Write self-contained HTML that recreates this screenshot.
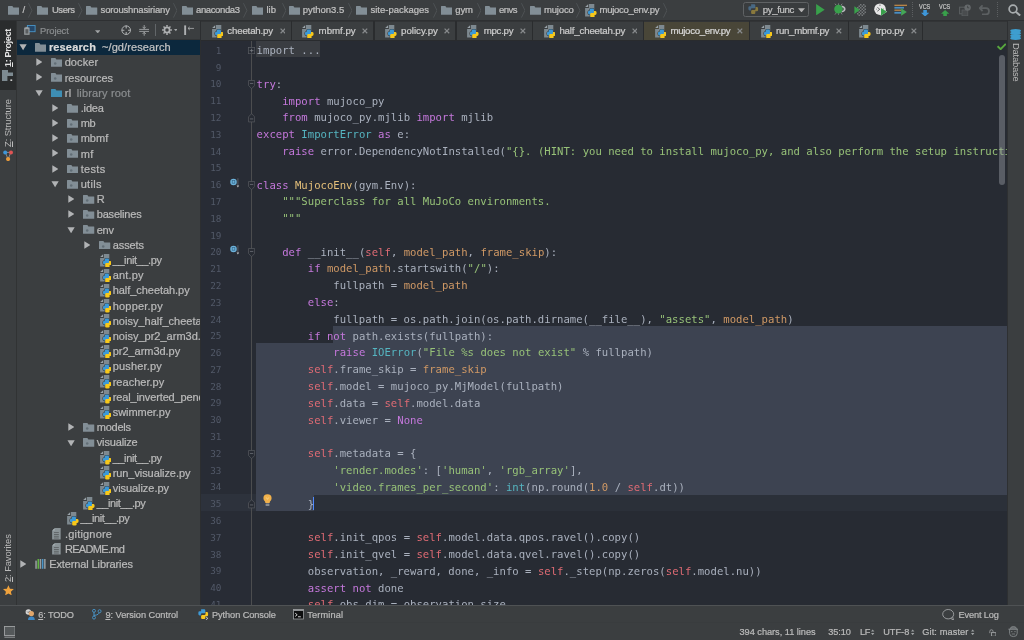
<!DOCTYPE html>
<html lang="en"><head><meta charset="utf-8"><title>mujoco_env.py - research</title><style>
html,body{margin:0;padding:0}
body{width:1024px;height:640px;overflow:hidden;background:#3c3f41;position:relative;font-family:"Liberation Sans",sans-serif;}
.t{position:absolute;white-space:pre;font-family:"Liberation Sans",sans-serif;-webkit-text-stroke:0.22px}
.cl{position:absolute;left:56.00px;white-space:pre;font-family:"DejaVu Sans Mono","Liberation Mono",monospace;font-size:10.60px;line-height:16.80px;height:16.80px;color:#abb2bf;letter-spacing:0.0145px}
.ln{position:absolute;left:0;width:20.80px;text-align:right;font-family:"DejaVu Sans Mono","Liberation Mono",monospace;font-size:9.30px;line-height:16.80px;height:16.80px;color:#535a69;letter-spacing:0.0000px}
#app{position:absolute;left:0;top:0;width:1024px;height:640px;overflow:hidden;opacity:0.999;will-change:transform}
u{text-decoration:underline;text-underline-offset:1px}
</style></head><body>
<div id="app">
<div style="position:absolute;left:0.00px;top:0.00px;width:1024.00px;height:20.00px;background:#3c3f41;"></div>
<div style="position:absolute;left:0.00px;top:20.00px;width:1024.00px;height:1.40px;background:#2f3133;"></div>
<svg style="position:absolute;left:7.75px;top:6.00px;" width="11.25" height="8.75" viewBox="0 0 18 14"><path d="M0 0.6 Q0 0 0.6 0 H7 L8.6 2.2 H17.4 Q18 2.2 18 2.8 V13.4 Q18 14 17.4 14 H0.6 Q0 14 0 13.4 Z" fill="#838f97"/></svg>
<span class="t " style="left:22.50px;top:3.30px;font-size:9.50px;line-height:14px;color:#c2c2c2;letter-spacing:0.461px;">/</span>
<svg style="position:absolute;left:28.30px;top:0.00px;" width="4.60" height="20.00" viewBox="0 0 5 20"><path d="M0.5 2.6 L4.3 10.4 L0.5 18.2" stroke="#53575a" stroke-width="0.9" fill="none"/></svg>
<svg style="position:absolute;left:36.90px;top:6.00px;" width="11.25" height="8.75" viewBox="0 0 18 14"><path d="M0 0.6 Q0 0 0.6 0 H7 L8.6 2.2 H17.4 Q18 2.2 18 2.8 V13.4 Q18 14 17.4 14 H0.6 Q0 14 0 13.4 Z" fill="#838f97"/></svg>
<span class="t " style="left:51.90px;top:3.30px;font-size:9.50px;line-height:14px;color:#c2c2c2;letter-spacing:-0.427px;">Users</span>
<svg style="position:absolute;left:78.00px;top:0.00px;" width="4.60" height="20.00" viewBox="0 0 5 20"><path d="M0.5 2.6 L4.3 10.4 L0.5 18.2" stroke="#53575a" stroke-width="0.9" fill="none"/></svg>
<svg style="position:absolute;left:86.25px;top:6.00px;" width="11.25" height="8.75" viewBox="0 0 18 14"><path d="M0 0.6 Q0 0 0.6 0 H7 L8.6 2.2 H17.4 Q18 2.2 18 2.8 V13.4 Q18 14 17.4 14 H0.6 Q0 14 0 13.4 Z" fill="#838f97"/></svg>
<span class="t " style="left:100.60px;top:3.30px;font-size:9.50px;line-height:14px;color:#c2c2c2;letter-spacing:-0.168px;">soroushnasiriany</span>
<svg style="position:absolute;left:172.80px;top:0.00px;" width="4.60" height="20.00" viewBox="0 0 5 20"><path d="M0.5 2.6 L4.3 10.4 L0.5 18.2" stroke="#53575a" stroke-width="0.9" fill="none"/></svg>
<svg style="position:absolute;left:181.50px;top:6.00px;" width="11.25" height="8.75" viewBox="0 0 18 14"><path d="M0 0.6 Q0 0 0.6 0 H7 L8.6 2.2 H17.4 Q18 2.2 18 2.8 V13.4 Q18 14 17.4 14 H0.6 Q0 14 0 13.4 Z" fill="#838f97"/></svg>
<span class="t " style="left:196.00px;top:3.30px;font-size:9.50px;line-height:14px;color:#c2c2c2;letter-spacing:-0.377px;">anaconda3</span>
<svg style="position:absolute;left:243.40px;top:0.00px;" width="4.60" height="20.00" viewBox="0 0 5 20"><path d="M0.5 2.6 L4.3 10.4 L0.5 18.2" stroke="#53575a" stroke-width="0.9" fill="none"/></svg>
<svg style="position:absolute;left:251.90px;top:6.00px;" width="11.25" height="8.75" viewBox="0 0 18 14"><path d="M0 0.6 Q0 0 0.6 0 H7 L8.6 2.2 H17.4 Q18 2.2 18 2.8 V13.4 Q18 14 17.4 14 H0.6 Q0 14 0 13.4 Z" fill="#838f97"/></svg>
<span class="t " style="left:266.50px;top:3.30px;font-size:9.50px;line-height:14px;color:#c2c2c2;letter-spacing:-0.003px;">lib</span>
<svg style="position:absolute;left:281.80px;top:0.00px;" width="4.60" height="20.00" viewBox="0 0 5 20"><path d="M0.5 2.6 L4.3 10.4 L0.5 18.2" stroke="#53575a" stroke-width="0.9" fill="none"/></svg>
<svg style="position:absolute;left:288.50px;top:6.00px;" width="11.25" height="8.75" viewBox="0 0 18 14"><path d="M0 0.6 Q0 0 0.6 0 H7 L8.6 2.2 H17.4 Q18 2.2 18 2.8 V13.4 Q18 14 17.4 14 H0.6 Q0 14 0 13.4 Z" fill="#838f97"/></svg>
<span class="t " style="left:302.75px;top:3.30px;font-size:9.50px;line-height:14px;color:#c2c2c2;letter-spacing:-0.029px;">python3.5</span>
<svg style="position:absolute;left:347.70px;top:0.00px;" width="4.60" height="20.00" viewBox="0 0 5 20"><path d="M0.5 2.6 L4.3 10.4 L0.5 18.2" stroke="#53575a" stroke-width="0.9" fill="none"/></svg>
<svg style="position:absolute;left:356.00px;top:6.00px;" width="11.25" height="8.75" viewBox="0 0 18 14"><path d="M0 0.6 Q0 0 0.6 0 H7 L8.6 2.2 H17.4 Q18 2.2 18 2.8 V13.4 Q18 14 17.4 14 H0.6 Q0 14 0 13.4 Z" fill="#838f97"/></svg>
<span class="t " style="left:370.50px;top:3.30px;font-size:9.50px;line-height:14px;color:#c2c2c2;letter-spacing:-0.010px;">site-packages</span>
<svg style="position:absolute;left:432.70px;top:0.00px;" width="4.60" height="20.00" viewBox="0 0 5 20"><path d="M0.5 2.6 L4.3 10.4 L0.5 18.2" stroke="#53575a" stroke-width="0.9" fill="none"/></svg>
<svg style="position:absolute;left:441.00px;top:6.00px;" width="11.25" height="8.75" viewBox="0 0 18 14"><path d="M0 0.6 Q0 0 0.6 0 H7 L8.6 2.2 H17.4 Q18 2.2 18 2.8 V13.4 Q18 14 17.4 14 H0.6 Q0 14 0 13.4 Z" fill="#838f97"/></svg>
<span class="t " style="left:455.25px;top:3.30px;font-size:9.50px;line-height:14px;color:#c2c2c2;letter-spacing:-0.099px;">gym</span>
<svg style="position:absolute;left:476.60px;top:0.00px;" width="4.60" height="20.00" viewBox="0 0 5 20"><path d="M0.5 2.6 L4.3 10.4 L0.5 18.2" stroke="#53575a" stroke-width="0.9" fill="none"/></svg>
<svg style="position:absolute;left:484.75px;top:6.00px;" width="11.25" height="8.75" viewBox="0 0 18 14"><path d="M0 0.6 Q0 0 0.6 0 H7 L8.6 2.2 H17.4 Q18 2.2 18 2.8 V13.4 Q18 14 17.4 14 H0.6 Q0 14 0 13.4 Z" fill="#838f97"/></svg>
<span class="t " style="left:499.00px;top:3.30px;font-size:9.50px;line-height:14px;color:#c2c2c2;letter-spacing:-0.522px;">envs</span>
<svg style="position:absolute;left:520.60px;top:0.00px;" width="4.60" height="20.00" viewBox="0 0 5 20"><path d="M0.5 2.6 L4.3 10.4 L0.5 18.2" stroke="#53575a" stroke-width="0.9" fill="none"/></svg>
<svg style="position:absolute;left:529.50px;top:6.00px;" width="11.25" height="8.75" viewBox="0 0 18 14"><path d="M0 0.6 Q0 0 0.6 0 H7 L8.6 2.2 H17.4 Q18 2.2 18 2.8 V13.4 Q18 14 17.4 14 H0.6 Q0 14 0 13.4 Z" fill="#838f97"/></svg>
<span class="t " style="left:544.00px;top:3.30px;font-size:9.50px;line-height:14px;color:#c2c2c2;letter-spacing:-0.175px;">mujoco</span>
<svg style="position:absolute;left:576.40px;top:0.00px;" width="4.60" height="20.00" viewBox="0 0 5 20"><path d="M0.5 2.6 L4.3 10.4 L0.5 18.2" stroke="#53575a" stroke-width="0.9" fill="none"/></svg>
<svg style="position:absolute;left:585.30px;top:3.70px;" width="11.80" height="13.60" viewBox="0 0 11.8 13.6"><path d="M3.9 0.1 H9.3 V12.4 H0.1 V3.9 H3.9 Z" fill="#7f8a91"/><path d="M3.1 0.2 V3.1 H0.2 Z" fill="#9aa3a9"/><rect x="4.70" y="4.60" width="4.30" height="4.40" rx="1.30" fill="#3c3f41" stroke="#3c3f41" stroke-width="1.10"/><rect x="3.00" y="6.70" width="4.60" height="3.70" rx="1.30" fill="#3c3f41" stroke="#3c3f41" stroke-width="1.10"/><rect x="5.20" y="9.10" width="4.40" height="4.40" rx="1.30" fill="#3c3f41" stroke="#3c3f41" stroke-width="1.10"/><rect x="6.90" y="7.00" width="4.60" height="3.90" rx="1.30" fill="#3c3f41" stroke="#3c3f41" stroke-width="1.10"/><rect x="4.70" y="4.60" width="4.30" height="4.40" rx="1.30" fill="#3d9ad8"/><rect x="3.00" y="6.70" width="4.60" height="3.70" rx="1.30" fill="#3d9ad8"/><rect x="5.20" y="9.10" width="4.40" height="4.40" rx="1.30" fill="#f8c91c"/><rect x="6.90" y="7.00" width="4.60" height="3.90" rx="1.30" fill="#f8c91c"/><rect x="4.70" y="6.70" width="4.30" height="2.30" rx="0.80" fill="#3d9ad8"/></svg>
<span class="t " style="left:599.50px;top:3.30px;font-size:9.50px;line-height:14px;color:#c2c2c2;letter-spacing:-0.266px;">mujoco_env.py</span>
<svg style="position:absolute;left:662.60px;top:0.00px;" width="4.60" height="20.00" viewBox="0 0 5 20"><path d="M0.5 2.6 L4.3 10.4 L0.5 18.2" stroke="#53575a" stroke-width="0.9" fill="none"/></svg>
<div style="position:absolute;left:743px;top:2px;width:63.8px;height:13.4px;border:0.8px solid #606365;border-radius:2.5px;background:#3a3d3f"></div>
<svg style="position:absolute;left:748.00px;top:4.00px;" width="11.00" height="11.00" viewBox="0 0 12 12"><path d="M3.4 0.4 H6.8 Q8 0.4 8 1.6 V3.6 Q8 4.6 7 4.6 H4.4 Q3.1 4.6 3.1 5.9 V7 H1.8 Q0.4 7 0.4 5.4 V3.8 Q0.4 2.4 1.8 2.4 H3.4 Z" fill="#4a6a85"/><path d="M8.2 3.2 H9.6 Q11 3.2 11 4.8 V6.6 Q11 8 9.6 8 H8 V9.8 Q8 11 6.8 11 H4.6 Q3.4 11 3.4 9.8 V7.8 Q3.4 6.6 4.6 6.6 H7 Q8.2 6.6 8.2 5.4 Z" fill="#8a7a3e"/></svg>
<span class="t " style="left:762.70px;top:2.80px;font-size:9.60px;line-height:14px;color:#c4c4c4;letter-spacing:-0.321px;">py_func</span>
<svg style="position:absolute;left:798.00px;top:7.60px;" width="7.00" height="4.60" viewBox="0 0 10 6"><path d="M0 0 H10 L5 6 Z" fill="#b4b4b4"/></svg>
<svg style="position:absolute;left:816.00px;top:4.00px;" width="8.80" height="11.40" viewBox="0 0 9 12"><path d="M0 0 L9 6 L0 12 Z" fill="#3aa14c"/></svg>
<svg style="position:absolute;left:832.00px;top:2.00px;" width="15.00" height="15.00" viewBox="0 0 15 15"><path d="M4 3 L3 1.7 M6.5 2.8 V1.5 M9 3 L10.3 1.8 M4 11.2 L3 12.5 M6.5 11.4 V12.7 M9 11.2 L10.3 12.4" stroke="#a4a7a9" stroke-width="0.7"/><path d="M9.4 3.6 Q13.6 4.2 13.6 7.1 Q13.6 10 9.4 10.6 Z" fill="#b9bcbe"/><path d="M10 5.2 Q12 5.6 12 7.1 Q12 8.6 10 9 Z" fill="#55595b"/><ellipse cx="6.4" cy="7.1" rx="4.2" ry="4.3" fill="#3aa14c"/></svg>
<svg style="position:absolute;left:853.60px;top:3.60px;" width="12.60" height="12.00" viewBox="0 0 12.6 12"><rect x="6.0" y="0.0" width="1.5" height="1.5" fill="#75797b"/><rect x="9.0" y="0.0" width="1.5" height="1.5" fill="#75797b"/><rect x="4.5" y="1.5" width="1.5" height="1.5" fill="#75797b"/><rect x="7.5" y="1.5" width="1.5" height="1.5" fill="#75797b"/><rect x="10.5" y="1.5" width="1.5" height="1.5" fill="#75797b"/><rect x="3.0" y="3.0" width="1.5" height="1.5" fill="#75797b"/><rect x="6.0" y="3.0" width="1.5" height="1.5" fill="#75797b"/><rect x="9.0" y="3.0" width="1.5" height="1.5" fill="#75797b"/><rect x="4.5" y="4.5" width="1.5" height="1.5" fill="#75797b"/><rect x="7.5" y="4.5" width="1.5" height="1.5" fill="#75797b"/><rect x="10.5" y="4.5" width="1.5" height="1.5" fill="#75797b"/><rect x="3.0" y="6.0" width="1.5" height="1.5" fill="#75797b"/><rect x="6.0" y="6.0" width="1.5" height="1.5" fill="#75797b"/><rect x="9.0" y="6.0" width="1.5" height="1.5" fill="#75797b"/><rect x="4.5" y="7.5" width="1.5" height="1.5" fill="#75797b"/><rect x="7.5" y="7.5" width="1.5" height="1.5" fill="#75797b"/><rect x="10.5" y="7.5" width="1.5" height="1.5" fill="#75797b"/><rect x="3.0" y="9.0" width="1.5" height="1.5" fill="#75797b"/><rect x="6.0" y="9.0" width="1.5" height="1.5" fill="#75797b"/><rect x="9.0" y="9.0" width="1.5" height="1.5" fill="#75797b"/><rect x="4.5" y="10.5" width="1.5" height="1.5" fill="#75797b"/><rect x="7.5" y="10.5" width="1.5" height="1.5" fill="#75797b"/><path d="M0.4 2.2 L5.8 6.1 L0.4 10 Z" fill="#3aa14c"/></svg>
<svg style="position:absolute;left:873.80px;top:3.40px;" width="13.40" height="13.40" viewBox="0 0 13.4 13.4"><circle cx="6" cy="6.2" r="5.8" fill="#e8e8e8"/><path d="M3.4 4.4 L5.8 6.3 L3.4 8.2 M6 1.6 V2.8 M10 6.2 H8.8 M2 6.2 H2.6" stroke="#55595b" stroke-width="0.9" fill="none"/><path d="M6.6 4.6 L13.2 8.7 L6.6 12.8 Z" fill="#e8e8e8"/><path d="M7 5 L12.9 8.8 L7 12.7 Z" fill="#3aa14c"/></svg>
<svg style="position:absolute;left:893.60px;top:4.00px;" width="13.40" height="12.40" viewBox="0 0 13.4 12.4"><rect x="0.4" y="0.7" width="12.6" height="1.2" fill="#c78d4a"/><rect x="0.4" y="2.9" width="9.6" height="1.7" fill="#4a8fc4"/><rect x="0.4" y="5.6" width="6.8" height="1.2" fill="#c78d4a"/><rect x="0.4" y="7.9" width="6.8" height="1.8" fill="#4a8fc4"/><path d="M7.2 4.3 L12.8 8 L7.2 11.7 Z" fill="#45a857"/></svg>
<div style="position:absolute;left:912.2px;top:1.5px;width:0;height:15px;border-left:1px dotted #5d6062"></div>
<div style="position:absolute;left:997.2px;top:1.5px;width:0;height:15px;border-left:1px dotted #5d6062"></div>
<span class="t " style="left:918.80px;top:2.60px;font-size:6.50px;line-height:8px;color:#c6c6c6;transform-origin:0 50%;transform:scaleX(0.84);">VCS</span>
<svg style="position:absolute;left:920.80px;top:9.60px;" width="8.20" height="6.60" viewBox="0 0 10 8"><path d="M5 8 L10 3.4 H7.2 V0 H2.8 V3.4 H0 Z" fill="#3f97d9"/></svg>
<span class="t " style="left:939.20px;top:2.60px;font-size:6.50px;line-height:8px;color:#c6c6c6;transform-origin:0 50%;transform:scaleX(0.84);">VCS</span>
<svg style="position:absolute;left:941.20px;top:9.60px;" width="8.20" height="6.60" viewBox="0 0 10 8"><path d="M5 0 L10 4.6 H7.2 V8 H2.8 V4.6 H0 Z" fill="#3aa14c"/></svg>
<svg style="position:absolute;left:959.00px;top:3.60px;" width="12.60" height="12.40" viewBox="0 0 12.6 12.4"><rect x="0.6" y="3.2" width="6.6" height="6.6" fill="none" stroke="#5b5f61" stroke-width="1.1"/><rect x="3" y="6" width="5.8" height="5.8" fill="#4a4d4f" stroke="#5b5f61" stroke-width="0.8"/><circle cx="8.6" cy="3.6" r="3.2" fill="#666a6c"/><path d="M8.6 1.8 V3.8 H10.2" stroke="#3c3f41" stroke-width="0.8" fill="none"/></svg>
<svg style="position:absolute;left:979.40px;top:4.60px;" width="10.80" height="10.40" viewBox="0 0 10.8 10.4"><path d="M3.6 0.4 L0.6 3.2 L3.6 6 M0.8 3.2 H7 Q10 3.2 10 6.2 Q10 9.4 7 9.4 H3" stroke="#5d6163" stroke-width="1.8" fill="none"/></svg>
<svg style="position:absolute;left:1007.60px;top:3.80px;" width="13.00" height="12.20" viewBox="0 0 13 12.2"><circle cx="5" cy="5" r="3.9" fill="none" stroke="#a9adaf" stroke-width="1.7"/><path d="M7.8 7.8 L12.2 11.6" stroke="#a9adaf" stroke-width="2"/></svg>
<div style="position:absolute;left:0.00px;top:21.40px;width:16.40px;height:584.00px;background:#3c3f41;"></div>
<div style="position:absolute;left:0.00px;top:21.40px;width:16.40px;height:69.00px;background:#2b2d2e;"></div>
<div style="position:absolute;left:16.20px;top:21.40px;width:1.00px;height:584.00px;background:#323435;"></div>
<span style="position:absolute;left:1.7px;top:66.5px;transform-origin:0 0;transform:rotate(-90deg);white-space:pre;font-size:9.1px;line-height:12px;height:12px;color:#e4e4e4;font-weight:bold;letter-spacing:-0.36px"><u>1</u>: Project</span>
<svg style="position:absolute;left:2.00px;top:70.00px;" width="11.40" height="11.40" viewBox="0 0 11.4 11.4"><path d="M0 0 H6 V2.6 H11.4 V6 H5.4 V11.4 H0 Z" fill="#7e8b92"/><rect x="8.4" y="9.4" width="1.8" height="1.6" fill="#d0d0d0"/></svg>
<span style="position:absolute;left:1.7px;top:146.6px;transform-origin:0 0;transform:rotate(-90deg);white-space:pre;font-size:9.4px;line-height:12px;height:12px;color:#bbbbbb;letter-spacing:-0.1px"><u>Z</u>: Structure</span>
<svg style="position:absolute;left:3.00px;top:150.00px;" width="10.40" height="11.40" viewBox="0 0 10.4 11.4"><path d="M2.4 2.4 L7.6 2.4 M2.4 2.4 L5 9 M7.8 2.4 L5.2 9" stroke="#9aa0a3" stroke-width="0.8"/><circle cx="2.2" cy="2.4" r="2" fill="#3f97d9"/><circle cx="8" cy="2.4" r="2" fill="#e05555"/><circle cx="5.1" cy="9" r="2.1" fill="#e79a3c"/></svg>
<span style="position:absolute;left:1.7px;top:581.6px;transform-origin:0 0;transform:rotate(-90deg);white-space:pre;font-size:9.4px;line-height:12px;height:12px;color:#bbbbbb;letter-spacing:-0.1px"><u>2</u>: Favorites</span>
<svg style="position:absolute;left:2.80px;top:584.60px;" width="10.80" height="10.60" viewBox="0 0 20 19"><path d="M10 0 L12.9 6.6 L20 7.3 L14.6 12 L16.2 19 L10 15.3 L3.8 19 L5.4 12 L0 7.3 L7.1 6.6 Z" fill="#f0a33e"/></svg>
<div style="position:absolute;left:17.20px;top:21.40px;width:183.00px;height:18.30px;background:#3c3f41;"></div>
<div style="position:absolute;left:17.20px;top:38.90px;width:183.00px;height:0.90px;background:#323537;"></div>
<svg style="position:absolute;left:24.20px;top:25.40px;" width="11.60" height="10.00" viewBox="0 0 11.6 10"><rect x="3.4" y="0.5" width="7.7" height="6.2" fill="#27496b" stroke="#4a96c9" stroke-width="0.9"/><path d="M0.2 2.6 H5.6 V9.8 H0.2 Z" fill="#9aa0a3"/><rect x="1.4" y="4.2" width="3" height="4.4" fill="#5a5e60"/><rect x="1.4" y="1.9" width="3" height="1" fill="#9aa0a3"/></svg>
<span class="t " style="left:40.10px;top:23.80px;font-size:9.40px;line-height:14px;color:#8a8d8f;letter-spacing:-0.076px;">Project</span>
<svg style="position:absolute;left:94.80px;top:29.60px;" width="5.40" height="3.60" viewBox="0 0 10 6"><path d="M0 0 H10 L5 6 Z" fill="#a0a3a5"/></svg>
<svg style="position:absolute;left:121.20px;top:25.00px;" width="10.40" height="10.40" viewBox="0 0 10.4 10.4"><circle cx="5.2" cy="5.2" r="4.3" fill="none" stroke="#afb1b3" stroke-width="1"/><path d="M5.2 0.6 V3.4 M5.2 7 V9.8 M0.6 5.2 H3.4 M7 5.2 H9.8" stroke="#afb1b3" stroke-width="1.1"/></svg>
<svg style="position:absolute;left:138.60px;top:24.80px;" width="10.40" height="10.80" viewBox="0 0 10.4 10.8"><path d="M0.2 4.4 H10.2 M0.2 6.4 H10.2" stroke="#afb1b3" stroke-width="0.8"/><path d="M5.2 0 V3.4 M3.6 1.8 L5.2 3.6 L6.8 1.8 M5.2 10.8 V7.4 M3.6 9 L5.2 7.2 L6.8 9" stroke="#afb1b3" stroke-width="0.8" fill="none"/></svg>
<div style="position:absolute;left:154.90px;top:23.80px;width:1.50px;height:12.20px;background:#63676a;"></div>
<svg style="position:absolute;left:162.20px;top:25.00px;" width="10.00" height="10.00" viewBox="0 0 10 10"><circle cx="5" cy="5" r="2.6" fill="none" stroke="#afb1b3" stroke-width="1.7"/><path d="M8.20 5.00 L9.90 5.00" stroke="#afb1b3" stroke-width="1.5"/><path d="M7.26 7.26 L8.46 8.46" stroke="#afb1b3" stroke-width="1.5"/><path d="M5.00 8.20 L5.00 9.90" stroke="#afb1b3" stroke-width="1.5"/><path d="M2.74 7.26 L1.54 8.46" stroke="#afb1b3" stroke-width="1.5"/><path d="M1.80 5.00 L0.10 5.00" stroke="#afb1b3" stroke-width="1.5"/><path d="M2.74 2.74 L1.54 1.54" stroke="#afb1b3" stroke-width="1.5"/><path d="M5.00 1.80 L5.00 0.10" stroke="#afb1b3" stroke-width="1.5"/><path d="M7.26 2.74 L8.46 1.54" stroke="#afb1b3" stroke-width="1.5"/></svg>
<svg style="position:absolute;left:173.60px;top:29.40px;" width="3.60" height="2.40" viewBox="0 0 10 6"><path d="M0 0 H10 L5 6 Z" fill="#a0a3a5"/></svg>
<svg style="position:absolute;left:184.40px;top:25.00px;" width="10.40" height="10.40" viewBox="0 0 10.4 10.4"><rect x="0.2" y="0.4" width="1.9" height="9.6" fill="#afb1b3"/><path d="M4 3.4 H10 M5.8 1.8 L4 3.4 L5.8 5" stroke="#afb1b3" stroke-width="0.8" fill="none"/></svg>
<div style="position:absolute;left:17.2px;top:39.7px;width:182.6px;height:565.3px;background:#3c3f41;overflow:hidden">
<div style="position:absolute;left:0.00px;top:0.00px;width:183.00px;height:15.20px;background:#0d293e;"></div>
<svg style="position:absolute;left:1.80px;top:4.65px;" width="8.20" height="6.60" viewBox="0 0 12 10"><path d="M0.5 0.5 H11.5 L6 9.5 Z" fill="#b2b4b6"/></svg>
<svg style="position:absolute;left:17.80px;top:3.35px;" width="11.25" height="8.75" viewBox="0 0 18 14"><path d="M0 0.6 Q0 0 0.6 0 H7 L8.6 2.2 H17.4 Q18 2.2 18 2.8 V13.4 Q18 14 17.4 14 H0.6 Q0 14 0 13.4 Z" fill="#838f97"/></svg>
<span class="t " style="left:31.70px;top:0.45px;font-size:11.00px;line-height:14px;color:#dcdcdc;font-weight:bold;letter-spacing:0.161px;">research</span>
<span class="t " style="left:84.80px;top:0.45px;font-size:11.00px;line-height:14px;color:#c4c4c4;letter-spacing:0.094px;">~/gd/research</span>
<svg style="position:absolute;left:18.60px;top:18.55px;" width="6.60" height="8.00" viewBox="0 0 10 12"><path d="M0.5 0.5 L9.5 6 L0.5 11.5 Z" fill="#b2b4b6"/></svg>
<svg style="position:absolute;left:33.90px;top:18.55px;" width="11.25" height="8.75" viewBox="0 0 18 14"><path d="M0 0.6 Q0 0 0.6 0 H7 L8.6 2.2 H17.4 Q18 2.2 18 2.8 V13.4 Q18 14 17.4 14 H0.6 Q0 14 0 13.4 Z" fill="#838f97"/><circle cx="6.7" cy="8.7" r="2.0" fill="#636f77"/></svg>
<span class="t " style="left:47.45px;top:15.65px;font-size:11.00px;line-height:14px;color:#bbbbbb;letter-spacing:0.097px;">docker</span>
<svg style="position:absolute;left:18.60px;top:33.75px;" width="6.60" height="8.00" viewBox="0 0 10 12"><path d="M0.5 0.5 L9.5 6 L0.5 11.5 Z" fill="#b2b4b6"/></svg>
<svg style="position:absolute;left:33.90px;top:33.75px;" width="11.25" height="8.75" viewBox="0 0 18 14"><path d="M0 0.6 Q0 0 0.6 0 H7 L8.6 2.2 H17.4 Q18 2.2 18 2.8 V13.4 Q18 14 17.4 14 H0.6 Q0 14 0 13.4 Z" fill="#838f97"/><circle cx="6.7" cy="8.7" r="2.0" fill="#636f77"/></svg>
<span class="t " style="left:47.45px;top:30.85px;font-size:11.00px;line-height:14px;color:#bbbbbb;letter-spacing:0.025px;">resources</span>
<svg style="position:absolute;left:17.80px;top:50.25px;" width="8.20" height="6.60" viewBox="0 0 12 10"><path d="M0.5 0.5 H11.5 L6 9.5 Z" fill="#b2b4b6"/></svg>
<svg style="position:absolute;left:33.90px;top:48.95px;" width="11.25" height="8.75" viewBox="0 0 18 14"><path d="M0 0.6 Q0 0 0.6 0 H7 L8.6 2.2 H17.4 Q18 2.2 18 2.8 V13.4 Q18 14 17.4 14 H0.6 Q0 14 0 13.4 Z" fill="#3f8fb5"/></svg>
<span class="t " style="left:47.45px;top:46.05px;font-size:11.00px;line-height:14px;color:#bbbbbb;letter-spacing:0.492px;">rl</span>
<span class="t " style="left:59.60px;top:46.05px;font-size:11.00px;line-height:14px;color:#8c8f91;letter-spacing:0.140px;">library root</span>
<svg style="position:absolute;left:34.60px;top:64.15px;" width="6.60" height="8.00" viewBox="0 0 10 12"><path d="M0.5 0.5 L9.5 6 L0.5 11.5 Z" fill="#b2b4b6"/></svg>
<svg style="position:absolute;left:50.00px;top:64.15px;" width="11.25" height="8.75" viewBox="0 0 18 14"><path d="M0 0.6 Q0 0 0.6 0 H7 L8.6 2.2 H17.4 Q18 2.2 18 2.8 V13.4 Q18 14 17.4 14 H0.6 Q0 14 0 13.4 Z" fill="#838f97"/></svg>
<span class="t " style="left:63.50px;top:61.25px;font-size:11.00px;line-height:14px;color:#bbbbbb;letter-spacing:-0.151px;">.idea</span>
<svg style="position:absolute;left:34.60px;top:79.35px;" width="6.60" height="8.00" viewBox="0 0 10 12"><path d="M0.5 0.5 L9.5 6 L0.5 11.5 Z" fill="#b2b4b6"/></svg>
<svg style="position:absolute;left:50.00px;top:79.35px;" width="11.25" height="8.75" viewBox="0 0 18 14"><path d="M0 0.6 Q0 0 0.6 0 H7 L8.6 2.2 H17.4 Q18 2.2 18 2.8 V13.4 Q18 14 17.4 14 H0.6 Q0 14 0 13.4 Z" fill="#838f97"/><circle cx="6.7" cy="8.7" r="2.0" fill="#636f77"/></svg>
<span class="t " style="left:63.50px;top:76.45px;font-size:11.00px;line-height:14px;color:#bbbbbb;letter-spacing:-0.281px;">mb</span>
<svg style="position:absolute;left:34.60px;top:94.55px;" width="6.60" height="8.00" viewBox="0 0 10 12"><path d="M0.5 0.5 L9.5 6 L0.5 11.5 Z" fill="#b2b4b6"/></svg>
<svg style="position:absolute;left:50.00px;top:94.55px;" width="11.25" height="8.75" viewBox="0 0 18 14"><path d="M0 0.6 Q0 0 0.6 0 H7 L8.6 2.2 H17.4 Q18 2.2 18 2.8 V13.4 Q18 14 17.4 14 H0.6 Q0 14 0 13.4 Z" fill="#838f97"/><circle cx="6.7" cy="8.7" r="2.0" fill="#636f77"/></svg>
<span class="t " style="left:63.50px;top:91.65px;font-size:11.00px;line-height:14px;color:#bbbbbb;letter-spacing:-0.000px;">mbmf</span>
<svg style="position:absolute;left:34.60px;top:109.75px;" width="6.60" height="8.00" viewBox="0 0 10 12"><path d="M0.5 0.5 L9.5 6 L0.5 11.5 Z" fill="#b2b4b6"/></svg>
<svg style="position:absolute;left:50.00px;top:109.75px;" width="11.25" height="8.75" viewBox="0 0 18 14"><path d="M0 0.6 Q0 0 0.6 0 H7 L8.6 2.2 H17.4 Q18 2.2 18 2.8 V13.4 Q18 14 17.4 14 H0.6 Q0 14 0 13.4 Z" fill="#838f97"/><circle cx="6.7" cy="8.7" r="2.0" fill="#636f77"/></svg>
<span class="t " style="left:63.50px;top:106.85px;font-size:11.00px;line-height:14px;color:#bbbbbb;letter-spacing:0.281px;">mf</span>
<svg style="position:absolute;left:34.60px;top:124.95px;" width="6.60" height="8.00" viewBox="0 0 10 12"><path d="M0.5 0.5 L9.5 6 L0.5 11.5 Z" fill="#b2b4b6"/></svg>
<svg style="position:absolute;left:50.00px;top:124.95px;" width="11.25" height="8.75" viewBox="0 0 18 14"><path d="M0 0.6 Q0 0 0.6 0 H7 L8.6 2.2 H17.4 Q18 2.2 18 2.8 V13.4 Q18 14 17.4 14 H0.6 Q0 14 0 13.4 Z" fill="#838f97"/><circle cx="6.7" cy="8.7" r="2.0" fill="#636f77"/></svg>
<span class="t " style="left:63.50px;top:122.05px;font-size:11.00px;line-height:14px;color:#bbbbbb;letter-spacing:0.318px;">tests</span>
<svg style="position:absolute;left:33.80px;top:141.45px;" width="8.20" height="6.60" viewBox="0 0 12 10"><path d="M0.5 0.5 H11.5 L6 9.5 Z" fill="#b2b4b6"/></svg>
<svg style="position:absolute;left:50.00px;top:140.15px;" width="11.25" height="8.75" viewBox="0 0 18 14"><path d="M0 0.6 Q0 0 0.6 0 H7 L8.6 2.2 H17.4 Q18 2.2 18 2.8 V13.4 Q18 14 17.4 14 H0.6 Q0 14 0 13.4 Z" fill="#838f97"/><circle cx="6.7" cy="8.7" r="2.0" fill="#636f77"/></svg>
<span class="t " style="left:63.50px;top:137.25px;font-size:11.00px;line-height:14px;color:#bbbbbb;letter-spacing:0.297px;">utils</span>
<svg style="position:absolute;left:50.60px;top:155.35px;" width="6.60" height="8.00" viewBox="0 0 10 12"><path d="M0.5 0.5 L9.5 6 L0.5 11.5 Z" fill="#b2b4b6"/></svg>
<svg style="position:absolute;left:66.10px;top:155.35px;" width="11.25" height="8.75" viewBox="0 0 18 14"><path d="M0 0.6 Q0 0 0.6 0 H7 L8.6 2.2 H17.4 Q18 2.2 18 2.8 V13.4 Q18 14 17.4 14 H0.6 Q0 14 0 13.4 Z" fill="#838f97"/><circle cx="6.7" cy="8.7" r="2.0" fill="#636f77"/></svg>
<span class="t " style="left:79.55px;top:152.45px;font-size:11.00px;line-height:14px;color:#bbbbbb;letter-spacing:-1.544px;">R</span>
<svg style="position:absolute;left:50.60px;top:170.55px;" width="6.60" height="8.00" viewBox="0 0 10 12"><path d="M0.5 0.5 L9.5 6 L0.5 11.5 Z" fill="#b2b4b6"/></svg>
<svg style="position:absolute;left:66.10px;top:170.55px;" width="11.25" height="8.75" viewBox="0 0 18 14"><path d="M0 0.6 Q0 0 0.6 0 H7 L8.6 2.2 H17.4 Q18 2.2 18 2.8 V13.4 Q18 14 17.4 14 H0.6 Q0 14 0 13.4 Z" fill="#838f97"/><circle cx="6.7" cy="8.7" r="2.0" fill="#636f77"/></svg>
<span class="t " style="left:79.55px;top:167.65px;font-size:11.00px;line-height:14px;color:#bbbbbb;letter-spacing:-0.185px;">baselines</span>
<svg style="position:absolute;left:49.80px;top:187.05px;" width="8.20" height="6.60" viewBox="0 0 12 10"><path d="M0.5 0.5 H11.5 L6 9.5 Z" fill="#b2b4b6"/></svg>
<svg style="position:absolute;left:66.10px;top:185.75px;" width="11.25" height="8.75" viewBox="0 0 18 14"><path d="M0 0.6 Q0 0 0.6 0 H7 L8.6 2.2 H17.4 Q18 2.2 18 2.8 V13.4 Q18 14 17.4 14 H0.6 Q0 14 0 13.4 Z" fill="#838f97"/><circle cx="6.7" cy="8.7" r="2.0" fill="#636f77"/></svg>
<span class="t " style="left:79.55px;top:182.85px;font-size:11.00px;line-height:14px;color:#bbbbbb;letter-spacing:-0.243px;">env</span>
<svg style="position:absolute;left:66.60px;top:200.95px;" width="6.60" height="8.00" viewBox="0 0 10 12"><path d="M0.5 0.5 L9.5 6 L0.5 11.5 Z" fill="#b2b4b6"/></svg>
<svg style="position:absolute;left:82.20px;top:200.95px;" width="11.25" height="8.75" viewBox="0 0 18 14"><path d="M0 0.6 Q0 0 0.6 0 H7 L8.6 2.2 H17.4 Q18 2.2 18 2.8 V13.4 Q18 14 17.4 14 H0.6 Q0 14 0 13.4 Z" fill="#838f97"/><circle cx="6.7" cy="8.7" r="2.0" fill="#636f77"/></svg>
<span class="t " style="left:95.60px;top:198.05px;font-size:11.00px;line-height:14px;color:#bbbbbb;letter-spacing:-0.108px;">assets</span>
<svg style="position:absolute;left:82.40px;top:213.95px;" width="11.80" height="13.60" viewBox="0 0 11.8 13.6"><path d="M3.9 0.1 H9.3 V12.4 H0.1 V3.9 H3.9 Z" fill="#7f8a91"/><path d="M3.1 0.2 V3.1 H0.2 Z" fill="#9aa3a9"/><rect x="4.70" y="4.60" width="4.30" height="4.40" rx="1.30" fill="#3c3f41" stroke="#3c3f41" stroke-width="1.10"/><rect x="3.00" y="6.70" width="4.60" height="3.70" rx="1.30" fill="#3c3f41" stroke="#3c3f41" stroke-width="1.10"/><rect x="5.20" y="9.10" width="4.40" height="4.40" rx="1.30" fill="#3c3f41" stroke="#3c3f41" stroke-width="1.10"/><rect x="6.90" y="7.00" width="4.60" height="3.90" rx="1.30" fill="#3c3f41" stroke="#3c3f41" stroke-width="1.10"/><rect x="4.70" y="4.60" width="4.30" height="4.40" rx="1.30" fill="#3d9ad8"/><rect x="3.00" y="6.70" width="4.60" height="3.70" rx="1.30" fill="#3d9ad8"/><rect x="5.20" y="9.10" width="4.40" height="4.40" rx="1.30" fill="#f8c91c"/><rect x="6.90" y="7.00" width="4.60" height="3.90" rx="1.30" fill="#f8c91c"/><rect x="4.70" y="6.70" width="4.30" height="2.30" rx="0.80" fill="#3d9ad8"/></svg>
<span class="t " style="left:95.50px;top:213.25px;font-size:11.00px;line-height:14px;color:#bbbbbb;letter-spacing:-0.401px;">__init__.py</span>
<svg style="position:absolute;left:82.40px;top:229.15px;" width="11.80" height="13.60" viewBox="0 0 11.8 13.6"><path d="M3.9 0.1 H9.3 V12.4 H0.1 V3.9 H3.9 Z" fill="#7f8a91"/><path d="M3.1 0.2 V3.1 H0.2 Z" fill="#9aa3a9"/><rect x="4.70" y="4.60" width="4.30" height="4.40" rx="1.30" fill="#3c3f41" stroke="#3c3f41" stroke-width="1.10"/><rect x="3.00" y="6.70" width="4.60" height="3.70" rx="1.30" fill="#3c3f41" stroke="#3c3f41" stroke-width="1.10"/><rect x="5.20" y="9.10" width="4.40" height="4.40" rx="1.30" fill="#3c3f41" stroke="#3c3f41" stroke-width="1.10"/><rect x="6.90" y="7.00" width="4.60" height="3.90" rx="1.30" fill="#3c3f41" stroke="#3c3f41" stroke-width="1.10"/><rect x="4.70" y="4.60" width="4.30" height="4.40" rx="1.30" fill="#3d9ad8"/><rect x="3.00" y="6.70" width="4.60" height="3.70" rx="1.30" fill="#3d9ad8"/><rect x="5.20" y="9.10" width="4.40" height="4.40" rx="1.30" fill="#f8c91c"/><rect x="6.90" y="7.00" width="4.60" height="3.90" rx="1.30" fill="#f8c91c"/><rect x="4.70" y="6.70" width="4.30" height="2.30" rx="0.80" fill="#3d9ad8"/></svg>
<span class="t " style="left:95.50px;top:228.45px;font-size:11.00px;line-height:14px;color:#bbbbbb;letter-spacing:0.157px;">ant.py</span>
<svg style="position:absolute;left:82.40px;top:244.35px;" width="11.80" height="13.60" viewBox="0 0 11.8 13.6"><path d="M3.9 0.1 H9.3 V12.4 H0.1 V3.9 H3.9 Z" fill="#7f8a91"/><path d="M3.1 0.2 V3.1 H0.2 Z" fill="#9aa3a9"/><rect x="4.70" y="4.60" width="4.30" height="4.40" rx="1.30" fill="#3c3f41" stroke="#3c3f41" stroke-width="1.10"/><rect x="3.00" y="6.70" width="4.60" height="3.70" rx="1.30" fill="#3c3f41" stroke="#3c3f41" stroke-width="1.10"/><rect x="5.20" y="9.10" width="4.40" height="4.40" rx="1.30" fill="#3c3f41" stroke="#3c3f41" stroke-width="1.10"/><rect x="6.90" y="7.00" width="4.60" height="3.90" rx="1.30" fill="#3c3f41" stroke="#3c3f41" stroke-width="1.10"/><rect x="4.70" y="4.60" width="4.30" height="4.40" rx="1.30" fill="#3d9ad8"/><rect x="3.00" y="6.70" width="4.60" height="3.70" rx="1.30" fill="#3d9ad8"/><rect x="5.20" y="9.10" width="4.40" height="4.40" rx="1.30" fill="#f8c91c"/><rect x="6.90" y="7.00" width="4.60" height="3.90" rx="1.30" fill="#f8c91c"/><rect x="4.70" y="6.70" width="4.30" height="2.30" rx="0.80" fill="#3d9ad8"/></svg>
<span class="t " style="left:95.50px;top:243.65px;font-size:11.00px;line-height:14px;color:#bbbbbb;letter-spacing:-0.048px;">half_cheetah.py</span>
<svg style="position:absolute;left:82.40px;top:259.55px;" width="11.80" height="13.60" viewBox="0 0 11.8 13.6"><path d="M3.9 0.1 H9.3 V12.4 H0.1 V3.9 H3.9 Z" fill="#7f8a91"/><path d="M3.1 0.2 V3.1 H0.2 Z" fill="#9aa3a9"/><rect x="4.70" y="4.60" width="4.30" height="4.40" rx="1.30" fill="#3c3f41" stroke="#3c3f41" stroke-width="1.10"/><rect x="3.00" y="6.70" width="4.60" height="3.70" rx="1.30" fill="#3c3f41" stroke="#3c3f41" stroke-width="1.10"/><rect x="5.20" y="9.10" width="4.40" height="4.40" rx="1.30" fill="#3c3f41" stroke="#3c3f41" stroke-width="1.10"/><rect x="6.90" y="7.00" width="4.60" height="3.90" rx="1.30" fill="#3c3f41" stroke="#3c3f41" stroke-width="1.10"/><rect x="4.70" y="4.60" width="4.30" height="4.40" rx="1.30" fill="#3d9ad8"/><rect x="3.00" y="6.70" width="4.60" height="3.70" rx="1.30" fill="#3d9ad8"/><rect x="5.20" y="9.10" width="4.40" height="4.40" rx="1.30" fill="#f8c91c"/><rect x="6.90" y="7.00" width="4.60" height="3.90" rx="1.30" fill="#f8c91c"/><rect x="4.70" y="6.70" width="4.30" height="2.30" rx="0.80" fill="#3d9ad8"/></svg>
<span class="t " style="left:95.50px;top:258.85px;font-size:11.00px;line-height:14px;color:#bbbbbb;letter-spacing:0.210px;">hopper.py</span>
<svg style="position:absolute;left:82.40px;top:274.75px;" width="11.80" height="13.60" viewBox="0 0 11.8 13.6"><path d="M3.9 0.1 H9.3 V12.4 H0.1 V3.9 H3.9 Z" fill="#7f8a91"/><path d="M3.1 0.2 V3.1 H0.2 Z" fill="#9aa3a9"/><rect x="4.70" y="4.60" width="4.30" height="4.40" rx="1.30" fill="#3c3f41" stroke="#3c3f41" stroke-width="1.10"/><rect x="3.00" y="6.70" width="4.60" height="3.70" rx="1.30" fill="#3c3f41" stroke="#3c3f41" stroke-width="1.10"/><rect x="5.20" y="9.10" width="4.40" height="4.40" rx="1.30" fill="#3c3f41" stroke="#3c3f41" stroke-width="1.10"/><rect x="6.90" y="7.00" width="4.60" height="3.90" rx="1.30" fill="#3c3f41" stroke="#3c3f41" stroke-width="1.10"/><rect x="4.70" y="4.60" width="4.30" height="4.40" rx="1.30" fill="#3d9ad8"/><rect x="3.00" y="6.70" width="4.60" height="3.70" rx="1.30" fill="#3d9ad8"/><rect x="5.20" y="9.10" width="4.40" height="4.40" rx="1.30" fill="#f8c91c"/><rect x="6.90" y="7.00" width="4.60" height="3.90" rx="1.30" fill="#f8c91c"/><rect x="4.70" y="6.70" width="4.30" height="2.30" rx="0.80" fill="#3d9ad8"/></svg>
<span class="t " style="left:95.50px;top:274.05px;font-size:11.00px;line-height:14px;color:#bbbbbb;letter-spacing:0.019px;">noisy_half_cheetah.py</span>
<svg style="position:absolute;left:82.40px;top:289.95px;" width="11.80" height="13.60" viewBox="0 0 11.8 13.6"><path d="M3.9 0.1 H9.3 V12.4 H0.1 V3.9 H3.9 Z" fill="#7f8a91"/><path d="M3.1 0.2 V3.1 H0.2 Z" fill="#9aa3a9"/><rect x="4.70" y="4.60" width="4.30" height="4.40" rx="1.30" fill="#3c3f41" stroke="#3c3f41" stroke-width="1.10"/><rect x="3.00" y="6.70" width="4.60" height="3.70" rx="1.30" fill="#3c3f41" stroke="#3c3f41" stroke-width="1.10"/><rect x="5.20" y="9.10" width="4.40" height="4.40" rx="1.30" fill="#3c3f41" stroke="#3c3f41" stroke-width="1.10"/><rect x="6.90" y="7.00" width="4.60" height="3.90" rx="1.30" fill="#3c3f41" stroke="#3c3f41" stroke-width="1.10"/><rect x="4.70" y="4.60" width="4.30" height="4.40" rx="1.30" fill="#3d9ad8"/><rect x="3.00" y="6.70" width="4.60" height="3.70" rx="1.30" fill="#3d9ad8"/><rect x="5.20" y="9.10" width="4.40" height="4.40" rx="1.30" fill="#f8c91c"/><rect x="6.90" y="7.00" width="4.60" height="3.90" rx="1.30" fill="#f8c91c"/><rect x="4.70" y="6.70" width="4.30" height="2.30" rx="0.80" fill="#3d9ad8"/></svg>
<span class="t " style="left:95.50px;top:289.25px;font-size:11.00px;line-height:14px;color:#bbbbbb;letter-spacing:0.008px;">noisy_pr2_arm3d.py</span>
<svg style="position:absolute;left:82.40px;top:305.15px;" width="11.80" height="13.60" viewBox="0 0 11.8 13.6"><path d="M3.9 0.1 H9.3 V12.4 H0.1 V3.9 H3.9 Z" fill="#7f8a91"/><path d="M3.1 0.2 V3.1 H0.2 Z" fill="#9aa3a9"/><rect x="4.70" y="4.60" width="4.30" height="4.40" rx="1.30" fill="#3c3f41" stroke="#3c3f41" stroke-width="1.10"/><rect x="3.00" y="6.70" width="4.60" height="3.70" rx="1.30" fill="#3c3f41" stroke="#3c3f41" stroke-width="1.10"/><rect x="5.20" y="9.10" width="4.40" height="4.40" rx="1.30" fill="#3c3f41" stroke="#3c3f41" stroke-width="1.10"/><rect x="6.90" y="7.00" width="4.60" height="3.90" rx="1.30" fill="#3c3f41" stroke="#3c3f41" stroke-width="1.10"/><rect x="4.70" y="4.60" width="4.30" height="4.40" rx="1.30" fill="#3d9ad8"/><rect x="3.00" y="6.70" width="4.60" height="3.70" rx="1.30" fill="#3d9ad8"/><rect x="5.20" y="9.10" width="4.40" height="4.40" rx="1.30" fill="#f8c91c"/><rect x="6.90" y="7.00" width="4.60" height="3.90" rx="1.30" fill="#f8c91c"/><rect x="4.70" y="6.70" width="4.30" height="2.30" rx="0.80" fill="#3d9ad8"/></svg>
<span class="t " style="left:95.50px;top:304.45px;font-size:11.00px;line-height:14px;color:#bbbbbb;letter-spacing:-0.034px;">pr2_arm3d.py</span>
<svg style="position:absolute;left:82.40px;top:320.35px;" width="11.80" height="13.60" viewBox="0 0 11.8 13.6"><path d="M3.9 0.1 H9.3 V12.4 H0.1 V3.9 H3.9 Z" fill="#7f8a91"/><path d="M3.1 0.2 V3.1 H0.2 Z" fill="#9aa3a9"/><rect x="4.70" y="4.60" width="4.30" height="4.40" rx="1.30" fill="#3c3f41" stroke="#3c3f41" stroke-width="1.10"/><rect x="3.00" y="6.70" width="4.60" height="3.70" rx="1.30" fill="#3c3f41" stroke="#3c3f41" stroke-width="1.10"/><rect x="5.20" y="9.10" width="4.40" height="4.40" rx="1.30" fill="#3c3f41" stroke="#3c3f41" stroke-width="1.10"/><rect x="6.90" y="7.00" width="4.60" height="3.90" rx="1.30" fill="#3c3f41" stroke="#3c3f41" stroke-width="1.10"/><rect x="4.70" y="4.60" width="4.30" height="4.40" rx="1.30" fill="#3d9ad8"/><rect x="3.00" y="6.70" width="4.60" height="3.70" rx="1.30" fill="#3d9ad8"/><rect x="5.20" y="9.10" width="4.40" height="4.40" rx="1.30" fill="#f8c91c"/><rect x="6.90" y="7.00" width="4.60" height="3.90" rx="1.30" fill="#f8c91c"/><rect x="4.70" y="6.70" width="4.30" height="2.30" rx="0.80" fill="#3d9ad8"/></svg>
<span class="t " style="left:95.50px;top:319.65px;font-size:11.00px;line-height:14px;color:#bbbbbb;letter-spacing:0.162px;">pusher.py</span>
<svg style="position:absolute;left:82.40px;top:335.55px;" width="11.80" height="13.60" viewBox="0 0 11.8 13.6"><path d="M3.9 0.1 H9.3 V12.4 H0.1 V3.9 H3.9 Z" fill="#7f8a91"/><path d="M3.1 0.2 V3.1 H0.2 Z" fill="#9aa3a9"/><rect x="4.70" y="4.60" width="4.30" height="4.40" rx="1.30" fill="#3c3f41" stroke="#3c3f41" stroke-width="1.10"/><rect x="3.00" y="6.70" width="4.60" height="3.70" rx="1.30" fill="#3c3f41" stroke="#3c3f41" stroke-width="1.10"/><rect x="5.20" y="9.10" width="4.40" height="4.40" rx="1.30" fill="#3c3f41" stroke="#3c3f41" stroke-width="1.10"/><rect x="6.90" y="7.00" width="4.60" height="3.90" rx="1.30" fill="#3c3f41" stroke="#3c3f41" stroke-width="1.10"/><rect x="4.70" y="4.60" width="4.30" height="4.40" rx="1.30" fill="#3d9ad8"/><rect x="3.00" y="6.70" width="4.60" height="3.70" rx="1.30" fill="#3d9ad8"/><rect x="5.20" y="9.10" width="4.40" height="4.40" rx="1.30" fill="#f8c91c"/><rect x="6.90" y="7.00" width="4.60" height="3.90" rx="1.30" fill="#f8c91c"/><rect x="4.70" y="6.70" width="4.30" height="2.30" rx="0.80" fill="#3d9ad8"/></svg>
<span class="t " style="left:95.50px;top:334.85px;font-size:11.00px;line-height:14px;color:#bbbbbb;letter-spacing:0.015px;">reacher.py</span>
<svg style="position:absolute;left:82.40px;top:350.75px;" width="11.80" height="13.60" viewBox="0 0 11.8 13.6"><path d="M3.9 0.1 H9.3 V12.4 H0.1 V3.9 H3.9 Z" fill="#7f8a91"/><path d="M3.1 0.2 V3.1 H0.2 Z" fill="#9aa3a9"/><rect x="4.70" y="4.60" width="4.30" height="4.40" rx="1.30" fill="#3c3f41" stroke="#3c3f41" stroke-width="1.10"/><rect x="3.00" y="6.70" width="4.60" height="3.70" rx="1.30" fill="#3c3f41" stroke="#3c3f41" stroke-width="1.10"/><rect x="5.20" y="9.10" width="4.40" height="4.40" rx="1.30" fill="#3c3f41" stroke="#3c3f41" stroke-width="1.10"/><rect x="6.90" y="7.00" width="4.60" height="3.90" rx="1.30" fill="#3c3f41" stroke="#3c3f41" stroke-width="1.10"/><rect x="4.70" y="4.60" width="4.30" height="4.40" rx="1.30" fill="#3d9ad8"/><rect x="3.00" y="6.70" width="4.60" height="3.70" rx="1.30" fill="#3d9ad8"/><rect x="5.20" y="9.10" width="4.40" height="4.40" rx="1.30" fill="#f8c91c"/><rect x="6.90" y="7.00" width="4.60" height="3.90" rx="1.30" fill="#f8c91c"/><rect x="4.70" y="6.70" width="4.30" height="2.30" rx="0.80" fill="#3d9ad8"/></svg>
<span class="t " style="left:95.50px;top:350.05px;font-size:11.00px;line-height:14px;color:#bbbbbb;letter-spacing:-0.129px;">real_inverted_pendulum.py</span>
<svg style="position:absolute;left:82.40px;top:365.95px;" width="11.80" height="13.60" viewBox="0 0 11.8 13.6"><path d="M3.9 0.1 H9.3 V12.4 H0.1 V3.9 H3.9 Z" fill="#7f8a91"/><path d="M3.1 0.2 V3.1 H0.2 Z" fill="#9aa3a9"/><rect x="4.70" y="4.60" width="4.30" height="4.40" rx="1.30" fill="#3c3f41" stroke="#3c3f41" stroke-width="1.10"/><rect x="3.00" y="6.70" width="4.60" height="3.70" rx="1.30" fill="#3c3f41" stroke="#3c3f41" stroke-width="1.10"/><rect x="5.20" y="9.10" width="4.40" height="4.40" rx="1.30" fill="#3c3f41" stroke="#3c3f41" stroke-width="1.10"/><rect x="6.90" y="7.00" width="4.60" height="3.90" rx="1.30" fill="#3c3f41" stroke="#3c3f41" stroke-width="1.10"/><rect x="4.70" y="4.60" width="4.30" height="4.40" rx="1.30" fill="#3d9ad8"/><rect x="3.00" y="6.70" width="4.60" height="3.70" rx="1.30" fill="#3d9ad8"/><rect x="5.20" y="9.10" width="4.40" height="4.40" rx="1.30" fill="#f8c91c"/><rect x="6.90" y="7.00" width="4.60" height="3.90" rx="1.30" fill="#f8c91c"/><rect x="4.70" y="6.70" width="4.30" height="2.30" rx="0.80" fill="#3d9ad8"/></svg>
<span class="t " style="left:95.50px;top:365.25px;font-size:11.00px;line-height:14px;color:#bbbbbb;letter-spacing:-0.035px;">swimmer.py</span>
<svg style="position:absolute;left:50.60px;top:383.35px;" width="6.60" height="8.00" viewBox="0 0 10 12"><path d="M0.5 0.5 L9.5 6 L0.5 11.5 Z" fill="#b2b4b6"/></svg>
<svg style="position:absolute;left:66.10px;top:383.35px;" width="11.25" height="8.75" viewBox="0 0 18 14"><path d="M0 0.6 Q0 0 0.6 0 H7 L8.6 2.2 H17.4 Q18 2.2 18 2.8 V13.4 Q18 14 17.4 14 H0.6 Q0 14 0 13.4 Z" fill="#838f97"/><circle cx="6.7" cy="8.7" r="2.0" fill="#636f77"/></svg>
<span class="t " style="left:79.55px;top:380.45px;font-size:11.00px;line-height:14px;color:#bbbbbb;letter-spacing:-0.242px;">models</span>
<svg style="position:absolute;left:49.80px;top:399.85px;" width="8.20" height="6.60" viewBox="0 0 12 10"><path d="M0.5 0.5 H11.5 L6 9.5 Z" fill="#b2b4b6"/></svg>
<svg style="position:absolute;left:66.10px;top:398.55px;" width="11.25" height="8.75" viewBox="0 0 18 14"><path d="M0 0.6 Q0 0 0.6 0 H7 L8.6 2.2 H17.4 Q18 2.2 18 2.8 V13.4 Q18 14 17.4 14 H0.6 Q0 14 0 13.4 Z" fill="#838f97"/><circle cx="6.7" cy="8.7" r="2.0" fill="#636f77"/></svg>
<span class="t " style="left:79.55px;top:395.65px;font-size:11.00px;line-height:14px;color:#bbbbbb;letter-spacing:-0.148px;">visualize</span>
<svg style="position:absolute;left:82.40px;top:411.55px;" width="11.80" height="13.60" viewBox="0 0 11.8 13.6"><path d="M3.9 0.1 H9.3 V12.4 H0.1 V3.9 H3.9 Z" fill="#7f8a91"/><path d="M3.1 0.2 V3.1 H0.2 Z" fill="#9aa3a9"/><rect x="4.70" y="4.60" width="4.30" height="4.40" rx="1.30" fill="#3c3f41" stroke="#3c3f41" stroke-width="1.10"/><rect x="3.00" y="6.70" width="4.60" height="3.70" rx="1.30" fill="#3c3f41" stroke="#3c3f41" stroke-width="1.10"/><rect x="5.20" y="9.10" width="4.40" height="4.40" rx="1.30" fill="#3c3f41" stroke="#3c3f41" stroke-width="1.10"/><rect x="6.90" y="7.00" width="4.60" height="3.90" rx="1.30" fill="#3c3f41" stroke="#3c3f41" stroke-width="1.10"/><rect x="4.70" y="4.60" width="4.30" height="4.40" rx="1.30" fill="#3d9ad8"/><rect x="3.00" y="6.70" width="4.60" height="3.70" rx="1.30" fill="#3d9ad8"/><rect x="5.20" y="9.10" width="4.40" height="4.40" rx="1.30" fill="#f8c91c"/><rect x="6.90" y="7.00" width="4.60" height="3.90" rx="1.30" fill="#f8c91c"/><rect x="4.70" y="6.70" width="4.30" height="2.30" rx="0.80" fill="#3d9ad8"/></svg>
<span class="t " style="left:95.50px;top:410.85px;font-size:11.00px;line-height:14px;color:#bbbbbb;letter-spacing:-0.401px;">__init__.py</span>
<svg style="position:absolute;left:82.40px;top:426.75px;" width="11.80" height="13.60" viewBox="0 0 11.8 13.6"><path d="M3.9 0.1 H9.3 V12.4 H0.1 V3.9 H3.9 Z" fill="#7f8a91"/><path d="M3.1 0.2 V3.1 H0.2 Z" fill="#9aa3a9"/><rect x="4.70" y="4.60" width="4.30" height="4.40" rx="1.30" fill="#3c3f41" stroke="#3c3f41" stroke-width="1.10"/><rect x="3.00" y="6.70" width="4.60" height="3.70" rx="1.30" fill="#3c3f41" stroke="#3c3f41" stroke-width="1.10"/><rect x="5.20" y="9.10" width="4.40" height="4.40" rx="1.30" fill="#3c3f41" stroke="#3c3f41" stroke-width="1.10"/><rect x="6.90" y="7.00" width="4.60" height="3.90" rx="1.30" fill="#3c3f41" stroke="#3c3f41" stroke-width="1.10"/><rect x="4.70" y="4.60" width="4.30" height="4.40" rx="1.30" fill="#3d9ad8"/><rect x="3.00" y="6.70" width="4.60" height="3.70" rx="1.30" fill="#3d9ad8"/><rect x="5.20" y="9.10" width="4.40" height="4.40" rx="1.30" fill="#f8c91c"/><rect x="6.90" y="7.00" width="4.60" height="3.90" rx="1.30" fill="#f8c91c"/><rect x="4.70" y="6.70" width="4.30" height="2.30" rx="0.80" fill="#3d9ad8"/></svg>
<span class="t " style="left:95.50px;top:426.05px;font-size:11.00px;line-height:14px;color:#bbbbbb;letter-spacing:-0.075px;">run_visualize.py</span>
<svg style="position:absolute;left:82.40px;top:441.95px;" width="11.80" height="13.60" viewBox="0 0 11.8 13.6"><path d="M3.9 0.1 H9.3 V12.4 H0.1 V3.9 H3.9 Z" fill="#7f8a91"/><path d="M3.1 0.2 V3.1 H0.2 Z" fill="#9aa3a9"/><rect x="4.70" y="4.60" width="4.30" height="4.40" rx="1.30" fill="#3c3f41" stroke="#3c3f41" stroke-width="1.10"/><rect x="3.00" y="6.70" width="4.60" height="3.70" rx="1.30" fill="#3c3f41" stroke="#3c3f41" stroke-width="1.10"/><rect x="5.20" y="9.10" width="4.40" height="4.40" rx="1.30" fill="#3c3f41" stroke="#3c3f41" stroke-width="1.10"/><rect x="6.90" y="7.00" width="4.60" height="3.90" rx="1.30" fill="#3c3f41" stroke="#3c3f41" stroke-width="1.10"/><rect x="4.70" y="4.60" width="4.30" height="4.40" rx="1.30" fill="#3d9ad8"/><rect x="3.00" y="6.70" width="4.60" height="3.70" rx="1.30" fill="#3d9ad8"/><rect x="5.20" y="9.10" width="4.40" height="4.40" rx="1.30" fill="#f8c91c"/><rect x="6.90" y="7.00" width="4.60" height="3.90" rx="1.30" fill="#f8c91c"/><rect x="4.70" y="6.70" width="4.30" height="2.30" rx="0.80" fill="#3d9ad8"/></svg>
<span class="t " style="left:95.50px;top:441.25px;font-size:11.00px;line-height:14px;color:#bbbbbb;letter-spacing:-0.055px;">visualize.py</span>
<svg style="position:absolute;left:66.30px;top:457.15px;" width="11.80" height="13.60" viewBox="0 0 11.8 13.6"><path d="M3.9 0.1 H9.3 V12.4 H0.1 V3.9 H3.9 Z" fill="#7f8a91"/><path d="M3.1 0.2 V3.1 H0.2 Z" fill="#9aa3a9"/><rect x="4.70" y="4.60" width="4.30" height="4.40" rx="1.30" fill="#3c3f41" stroke="#3c3f41" stroke-width="1.10"/><rect x="3.00" y="6.70" width="4.60" height="3.70" rx="1.30" fill="#3c3f41" stroke="#3c3f41" stroke-width="1.10"/><rect x="5.20" y="9.10" width="4.40" height="4.40" rx="1.30" fill="#3c3f41" stroke="#3c3f41" stroke-width="1.10"/><rect x="6.90" y="7.00" width="4.60" height="3.90" rx="1.30" fill="#3c3f41" stroke="#3c3f41" stroke-width="1.10"/><rect x="4.70" y="4.60" width="4.30" height="4.40" rx="1.30" fill="#3d9ad8"/><rect x="3.00" y="6.70" width="4.60" height="3.70" rx="1.30" fill="#3d9ad8"/><rect x="5.20" y="9.10" width="4.40" height="4.40" rx="1.30" fill="#f8c91c"/><rect x="6.90" y="7.00" width="4.60" height="3.90" rx="1.30" fill="#f8c91c"/><rect x="4.70" y="6.70" width="4.30" height="2.30" rx="0.80" fill="#3d9ad8"/></svg>
<span class="t " style="left:79.45px;top:456.45px;font-size:11.00px;line-height:14px;color:#bbbbbb;letter-spacing:-0.401px;">__init__.py</span>
<svg style="position:absolute;left:50.20px;top:472.35px;" width="11.80" height="13.60" viewBox="0 0 11.8 13.6"><path d="M3.9 0.1 H9.3 V12.4 H0.1 V3.9 H3.9 Z" fill="#7f8a91"/><path d="M3.1 0.2 V3.1 H0.2 Z" fill="#9aa3a9"/><rect x="4.70" y="4.60" width="4.30" height="4.40" rx="1.30" fill="#3c3f41" stroke="#3c3f41" stroke-width="1.10"/><rect x="3.00" y="6.70" width="4.60" height="3.70" rx="1.30" fill="#3c3f41" stroke="#3c3f41" stroke-width="1.10"/><rect x="5.20" y="9.10" width="4.40" height="4.40" rx="1.30" fill="#3c3f41" stroke="#3c3f41" stroke-width="1.10"/><rect x="6.90" y="7.00" width="4.60" height="3.90" rx="1.30" fill="#3c3f41" stroke="#3c3f41" stroke-width="1.10"/><rect x="4.70" y="4.60" width="4.30" height="4.40" rx="1.30" fill="#3d9ad8"/><rect x="3.00" y="6.70" width="4.60" height="3.70" rx="1.30" fill="#3d9ad8"/><rect x="5.20" y="9.10" width="4.40" height="4.40" rx="1.30" fill="#f8c91c"/><rect x="6.90" y="7.00" width="4.60" height="3.90" rx="1.30" fill="#f8c91c"/><rect x="4.70" y="6.70" width="4.30" height="2.30" rx="0.80" fill="#3d9ad8"/></svg>
<span class="t " style="left:63.40px;top:471.65px;font-size:11.00px;line-height:14px;color:#bbbbbb;letter-spacing:-0.401px;">__init__.py</span>
<svg style="position:absolute;left:34.80px;top:488.55px;" width="8.80" height="11.40" viewBox="0 0 12 16"><path d="M4 0 H12 V16 H0 V4 Z" fill="#8b9498"/><path d="M3.4 0.2 V3.6 H0.2 Z" fill="#b0b8bc"/><rect x="2.6" y="6.0" width="6.8" height="1.1" fill="#565a5c"/><rect x="2.6" y="8.5" width="6.8" height="1.1" fill="#565a5c"/><rect x="2.6" y="11.0" width="6.8" height="1.1" fill="#565a5c"/><rect x="2.6" y="13.5" width="6.8" height="1.1" fill="#565a5c"/></svg>
<span class="t " style="left:47.75px;top:486.85px;font-size:11.00px;line-height:14px;color:#bbbbbb;letter-spacing:0.194px;">.gitignore</span>
<svg style="position:absolute;left:34.80px;top:503.75px;" width="8.80" height="11.40" viewBox="0 0 12 16"><path d="M4 0 H12 V16 H0 V4 Z" fill="#8b9498"/><path d="M3.4 0.2 V3.6 H0.2 Z" fill="#b0b8bc"/><rect x="2.6" y="6.0" width="6.8" height="1.1" fill="#565a5c"/><rect x="2.6" y="8.5" width="6.8" height="1.1" fill="#565a5c"/><rect x="2.6" y="11.0" width="6.8" height="1.1" fill="#565a5c"/><rect x="2.6" y="13.5" width="6.8" height="1.1" fill="#565a5c"/></svg>
<span class="t " style="left:47.75px;top:502.05px;font-size:11.00px;line-height:14px;color:#bbbbbb;letter-spacing:-0.675px;">README.md</span>
<svg style="position:absolute;left:2.60px;top:520.15px;" width="6.60" height="8.00" viewBox="0 0 10 12"><path d="M0.5 0.5 L9.5 6 L0.5 11.5 Z" fill="#b2b4b6"/></svg>
<svg style="position:absolute;left:17.80px;top:519.75px;" width="11.40" height="9.80" viewBox="0 0 11.4 9.8"><rect x="0.3" y="1.6" width="1.5" height="8.2" fill="#9aa0a3"/><rect x="2.5" y="0.0" width="1.5" height="9.8" fill="#62b543"/><rect x="4.7" y="0.0" width="1.5" height="9.8" fill="#9aa0a3"/><rect x="6.9" y="0.0" width="1.5" height="9.8" fill="#4a96c9"/><rect x="9.1" y="0.0" width="1.5" height="9.8" fill="#9aa0a3"/></svg>
<span class="t " style="left:32.00px;top:517.25px;font-size:11.00px;line-height:14px;color:#bbbbbb;letter-spacing:-0.109px;">External Libraries</span>
</div>
<div style="position:absolute;left:200.60px;top:21.40px;width:807.60px;height:18.70px;background:#3c3f41;"></div>
<div style="position:absolute;left:200.60px;top:40.00px;width:807.60px;height:1.00px;background:#2a2c2f;"></div>
<div style="position:absolute;left:200.60px;top:21.20px;width:807.60px;height:0.60px;background:#333537;"></div>
<div style="position:absolute;left:199.80px;top:21.40px;width:1.00px;height:584.00px;background:#2d2f31;"></div>
<div style="position:absolute;left:200.70px;top:21.80px;width:90.50px;height:18.20px;background:#3c3f41;"></div>
<svg style="position:absolute;left:211.70px;top:24.60px;" width="11.80" height="13.60" viewBox="0 0 11.8 13.6"><path d="M3.9 0.1 H9.3 V12.4 H0.1 V3.9 H3.9 Z" fill="#7f8a91"/><path d="M3.1 0.2 V3.1 H0.2 Z" fill="#9aa3a9"/><rect x="4.70" y="4.60" width="4.30" height="4.40" rx="1.30" fill="#3c3f41" stroke="#3c3f41" stroke-width="1.10"/><rect x="3.00" y="6.70" width="4.60" height="3.70" rx="1.30" fill="#3c3f41" stroke="#3c3f41" stroke-width="1.10"/><rect x="5.20" y="9.10" width="4.40" height="4.40" rx="1.30" fill="#3c3f41" stroke="#3c3f41" stroke-width="1.10"/><rect x="6.90" y="7.00" width="4.60" height="3.90" rx="1.30" fill="#3c3f41" stroke="#3c3f41" stroke-width="1.10"/><rect x="4.70" y="4.60" width="4.30" height="4.40" rx="1.30" fill="#3d9ad8"/><rect x="3.00" y="6.70" width="4.60" height="3.70" rx="1.30" fill="#3d9ad8"/><rect x="5.20" y="9.10" width="4.40" height="4.40" rx="1.30" fill="#f8c91c"/><rect x="6.90" y="7.00" width="4.60" height="3.90" rx="1.30" fill="#f8c91c"/><rect x="4.70" y="6.70" width="4.30" height="2.30" rx="0.80" fill="#3d9ad8"/></svg>
<span class="t " style="left:227.25px;top:24.00px;font-size:9.70px;line-height:14px;color:#cccccc;letter-spacing:-0.162px;">cheetah.py</span>
<svg style="position:absolute;left:279.60px;top:28.10px;" width="5.80" height="5.80" viewBox="0 0 10 10"><path d="M1 1 L9 9 M9 1 L1 9" stroke="#888b8d" stroke-width="2.1" fill="none"/></svg>
<div style="position:absolute;left:291.20px;top:21.80px;width:82.80px;height:18.20px;background:#3c3f41;"></div>
<svg style="position:absolute;left:302.20px;top:24.60px;" width="11.80" height="13.60" viewBox="0 0 11.8 13.6"><path d="M3.9 0.1 H9.3 V12.4 H0.1 V3.9 H3.9 Z" fill="#7f8a91"/><path d="M3.1 0.2 V3.1 H0.2 Z" fill="#9aa3a9"/><rect x="4.70" y="4.60" width="4.30" height="4.40" rx="1.30" fill="#3c3f41" stroke="#3c3f41" stroke-width="1.10"/><rect x="3.00" y="6.70" width="4.60" height="3.70" rx="1.30" fill="#3c3f41" stroke="#3c3f41" stroke-width="1.10"/><rect x="5.20" y="9.10" width="4.40" height="4.40" rx="1.30" fill="#3c3f41" stroke="#3c3f41" stroke-width="1.10"/><rect x="6.90" y="7.00" width="4.60" height="3.90" rx="1.30" fill="#3c3f41" stroke="#3c3f41" stroke-width="1.10"/><rect x="4.70" y="4.60" width="4.30" height="4.40" rx="1.30" fill="#3d9ad8"/><rect x="3.00" y="6.70" width="4.60" height="3.70" rx="1.30" fill="#3d9ad8"/><rect x="5.20" y="9.10" width="4.40" height="4.40" rx="1.30" fill="#f8c91c"/><rect x="6.90" y="7.00" width="4.60" height="3.90" rx="1.30" fill="#f8c91c"/><rect x="4.70" y="6.70" width="4.30" height="2.30" rx="0.80" fill="#3d9ad8"/></svg>
<span class="t " style="left:318.60px;top:24.00px;font-size:9.70px;line-height:14px;color:#cccccc;letter-spacing:-0.015px;">mbmf.py</span>
<svg style="position:absolute;left:361.80px;top:28.10px;" width="5.80" height="5.80" viewBox="0 0 10 10"><path d="M1 1 L9 9 M9 1 L1 9" stroke="#888b8d" stroke-width="2.1" fill="none"/></svg>
<div style="position:absolute;left:374.00px;top:21.80px;width:82.00px;height:18.20px;background:#3c3f41;"></div>
<svg style="position:absolute;left:385.00px;top:24.60px;" width="11.80" height="13.60" viewBox="0 0 11.8 13.6"><path d="M3.9 0.1 H9.3 V12.4 H0.1 V3.9 H3.9 Z" fill="#7f8a91"/><path d="M3.1 0.2 V3.1 H0.2 Z" fill="#9aa3a9"/><rect x="4.70" y="4.60" width="4.30" height="4.40" rx="1.30" fill="#3c3f41" stroke="#3c3f41" stroke-width="1.10"/><rect x="3.00" y="6.70" width="4.60" height="3.70" rx="1.30" fill="#3c3f41" stroke="#3c3f41" stroke-width="1.10"/><rect x="5.20" y="9.10" width="4.40" height="4.40" rx="1.30" fill="#3c3f41" stroke="#3c3f41" stroke-width="1.10"/><rect x="6.90" y="7.00" width="4.60" height="3.90" rx="1.30" fill="#3c3f41" stroke="#3c3f41" stroke-width="1.10"/><rect x="4.70" y="4.60" width="4.30" height="4.40" rx="1.30" fill="#3d9ad8"/><rect x="3.00" y="6.70" width="4.60" height="3.70" rx="1.30" fill="#3d9ad8"/><rect x="5.20" y="9.10" width="4.40" height="4.40" rx="1.30" fill="#f8c91c"/><rect x="6.90" y="7.00" width="4.60" height="3.90" rx="1.30" fill="#f8c91c"/><rect x="4.70" y="6.70" width="4.30" height="2.30" rx="0.80" fill="#3d9ad8"/></svg>
<span class="t " style="left:401.10px;top:24.00px;font-size:9.70px;line-height:14px;color:#cccccc;letter-spacing:-0.015px;">policy.py</span>
<svg style="position:absolute;left:444.20px;top:28.10px;" width="5.80" height="5.80" viewBox="0 0 10 10"><path d="M1 1 L9 9 M9 1 L1 9" stroke="#888b8d" stroke-width="2.1" fill="none"/></svg>
<div style="position:absolute;left:456.00px;top:21.80px;width:76.50px;height:18.20px;background:#3c3f41;"></div>
<svg style="position:absolute;left:467.00px;top:24.60px;" width="11.80" height="13.60" viewBox="0 0 11.8 13.6"><path d="M3.9 0.1 H9.3 V12.4 H0.1 V3.9 H3.9 Z" fill="#7f8a91"/><path d="M3.1 0.2 V3.1 H0.2 Z" fill="#9aa3a9"/><rect x="4.70" y="4.60" width="4.30" height="4.40" rx="1.30" fill="#3c3f41" stroke="#3c3f41" stroke-width="1.10"/><rect x="3.00" y="6.70" width="4.60" height="3.70" rx="1.30" fill="#3c3f41" stroke="#3c3f41" stroke-width="1.10"/><rect x="5.20" y="9.10" width="4.40" height="4.40" rx="1.30" fill="#3c3f41" stroke="#3c3f41" stroke-width="1.10"/><rect x="6.90" y="7.00" width="4.60" height="3.90" rx="1.30" fill="#3c3f41" stroke="#3c3f41" stroke-width="1.10"/><rect x="4.70" y="4.60" width="4.30" height="4.40" rx="1.30" fill="#3d9ad8"/><rect x="3.00" y="6.70" width="4.60" height="3.70" rx="1.30" fill="#3d9ad8"/><rect x="5.20" y="9.10" width="4.40" height="4.40" rx="1.30" fill="#f8c91c"/><rect x="6.90" y="7.00" width="4.60" height="3.90" rx="1.30" fill="#f8c91c"/><rect x="4.70" y="6.70" width="4.30" height="2.30" rx="0.80" fill="#3d9ad8"/></svg>
<span class="t " style="left:483.70px;top:24.00px;font-size:9.70px;line-height:14px;color:#cccccc;letter-spacing:-0.273px;">mpc.py</span>
<svg style="position:absolute;left:520.20px;top:28.10px;" width="5.80" height="5.80" viewBox="0 0 10 10"><path d="M1 1 L9 9 M9 1 L1 9" stroke="#888b8d" stroke-width="2.1" fill="none"/></svg>
<div style="position:absolute;left:532.50px;top:21.80px;width:111.20px;height:18.20px;background:#3c3f41;"></div>
<svg style="position:absolute;left:543.50px;top:24.60px;" width="11.80" height="13.60" viewBox="0 0 11.8 13.6"><path d="M3.9 0.1 H9.3 V12.4 H0.1 V3.9 H3.9 Z" fill="#7f8a91"/><path d="M3.1 0.2 V3.1 H0.2 Z" fill="#9aa3a9"/><rect x="4.70" y="4.60" width="4.30" height="4.40" rx="1.30" fill="#3c3f41" stroke="#3c3f41" stroke-width="1.10"/><rect x="3.00" y="6.70" width="4.60" height="3.70" rx="1.30" fill="#3c3f41" stroke="#3c3f41" stroke-width="1.10"/><rect x="5.20" y="9.10" width="4.40" height="4.40" rx="1.30" fill="#3c3f41" stroke="#3c3f41" stroke-width="1.10"/><rect x="6.90" y="7.00" width="4.60" height="3.90" rx="1.30" fill="#3c3f41" stroke="#3c3f41" stroke-width="1.10"/><rect x="4.70" y="4.60" width="4.30" height="4.40" rx="1.30" fill="#3d9ad8"/><rect x="3.00" y="6.70" width="4.60" height="3.70" rx="1.30" fill="#3d9ad8"/><rect x="5.20" y="9.10" width="4.40" height="4.40" rx="1.30" fill="#f8c91c"/><rect x="6.90" y="7.00" width="4.60" height="3.90" rx="1.30" fill="#f8c91c"/><rect x="4.70" y="6.70" width="4.30" height="2.30" rx="0.80" fill="#3d9ad8"/></svg>
<span class="t " style="left:559.40px;top:24.00px;font-size:9.70px;line-height:14px;color:#cccccc;letter-spacing:-0.178px;">half_cheetah.py</span>
<svg style="position:absolute;left:631.60px;top:28.10px;" width="5.80" height="5.80" viewBox="0 0 10 10"><path d="M1 1 L9 9 M9 1 L1 9" stroke="#888b8d" stroke-width="2.1" fill="none"/></svg>
<div style="position:absolute;left:643.70px;top:21.80px;width:106.00px;height:18.20px;background:#4a4739;"></div>
<svg style="position:absolute;left:654.70px;top:24.60px;" width="11.80" height="13.60" viewBox="0 0 11.8 13.6"><path d="M3.9 0.1 H9.3 V12.4 H0.1 V3.9 H3.9 Z" fill="#7f8a91"/><path d="M3.1 0.2 V3.1 H0.2 Z" fill="#9aa3a9"/><rect x="4.70" y="4.60" width="4.30" height="4.40" rx="1.30" fill="#4a4739" stroke="#4a4739" stroke-width="1.10"/><rect x="3.00" y="6.70" width="4.60" height="3.70" rx="1.30" fill="#4a4739" stroke="#4a4739" stroke-width="1.10"/><rect x="5.20" y="9.10" width="4.40" height="4.40" rx="1.30" fill="#4a4739" stroke="#4a4739" stroke-width="1.10"/><rect x="6.90" y="7.00" width="4.60" height="3.90" rx="1.30" fill="#4a4739" stroke="#4a4739" stroke-width="1.10"/><rect x="4.70" y="4.60" width="4.30" height="4.40" rx="1.30" fill="#3d9ad8"/><rect x="3.00" y="6.70" width="4.60" height="3.70" rx="1.30" fill="#3d9ad8"/><rect x="5.20" y="9.10" width="4.40" height="4.40" rx="1.30" fill="#f8c91c"/><rect x="6.90" y="7.00" width="4.60" height="3.90" rx="1.30" fill="#f8c91c"/><rect x="4.70" y="6.70" width="4.30" height="2.30" rx="0.80" fill="#3d9ad8"/></svg>
<span class="t " style="left:670.60px;top:24.00px;font-size:9.70px;line-height:14px;color:#d8d8d8;letter-spacing:-0.360px;">mujoco_env.py</span>
<svg style="position:absolute;left:737.10px;top:28.10px;" width="5.80" height="5.80" viewBox="0 0 10 10"><path d="M1 1 L9 9 M9 1 L1 9" stroke="#888b8d" stroke-width="2.1" fill="none"/></svg>
<div style="position:absolute;left:749.70px;top:21.80px;width:98.50px;height:18.20px;background:#3c3f41;"></div>
<svg style="position:absolute;left:760.70px;top:24.60px;" width="11.80" height="13.60" viewBox="0 0 11.8 13.6"><path d="M3.9 0.1 H9.3 V12.4 H0.1 V3.9 H3.9 Z" fill="#7f8a91"/><path d="M3.1 0.2 V3.1 H0.2 Z" fill="#9aa3a9"/><rect x="4.70" y="4.60" width="4.30" height="4.40" rx="1.30" fill="#3c3f41" stroke="#3c3f41" stroke-width="1.10"/><rect x="3.00" y="6.70" width="4.60" height="3.70" rx="1.30" fill="#3c3f41" stroke="#3c3f41" stroke-width="1.10"/><rect x="5.20" y="9.10" width="4.40" height="4.40" rx="1.30" fill="#3c3f41" stroke="#3c3f41" stroke-width="1.10"/><rect x="6.90" y="7.00" width="4.60" height="3.90" rx="1.30" fill="#3c3f41" stroke="#3c3f41" stroke-width="1.10"/><rect x="4.70" y="4.60" width="4.30" height="4.40" rx="1.30" fill="#3d9ad8"/><rect x="3.00" y="6.70" width="4.60" height="3.70" rx="1.30" fill="#3d9ad8"/><rect x="5.20" y="9.10" width="4.40" height="4.40" rx="1.30" fill="#f8c91c"/><rect x="6.90" y="7.00" width="4.60" height="3.90" rx="1.30" fill="#f8c91c"/><rect x="4.70" y="6.70" width="4.30" height="2.30" rx="0.80" fill="#3d9ad8"/></svg>
<span class="t " style="left:776.00px;top:24.00px;font-size:9.70px;line-height:14px;color:#cccccc;letter-spacing:-0.311px;">run_mbmf.py</span>
<svg style="position:absolute;left:836.00px;top:28.10px;" width="5.80" height="5.80" viewBox="0 0 10 10"><path d="M1 1 L9 9 M9 1 L1 9" stroke="#888b8d" stroke-width="2.1" fill="none"/></svg>
<div style="position:absolute;left:848.20px;top:21.80px;width:74.40px;height:18.20px;background:#3c3f41;"></div>
<svg style="position:absolute;left:859.20px;top:24.60px;" width="11.80" height="13.60" viewBox="0 0 11.8 13.6"><path d="M3.9 0.1 H9.3 V12.4 H0.1 V3.9 H3.9 Z" fill="#7f8a91"/><path d="M3.1 0.2 V3.1 H0.2 Z" fill="#9aa3a9"/><rect x="4.70" y="4.60" width="4.30" height="4.40" rx="1.30" fill="#3c3f41" stroke="#3c3f41" stroke-width="1.10"/><rect x="3.00" y="6.70" width="4.60" height="3.70" rx="1.30" fill="#3c3f41" stroke="#3c3f41" stroke-width="1.10"/><rect x="5.20" y="9.10" width="4.40" height="4.40" rx="1.30" fill="#3c3f41" stroke="#3c3f41" stroke-width="1.10"/><rect x="6.90" y="7.00" width="4.60" height="3.90" rx="1.30" fill="#3c3f41" stroke="#3c3f41" stroke-width="1.10"/><rect x="4.70" y="4.60" width="4.30" height="4.40" rx="1.30" fill="#3d9ad8"/><rect x="3.00" y="6.70" width="4.60" height="3.70" rx="1.30" fill="#3d9ad8"/><rect x="5.20" y="9.10" width="4.40" height="4.40" rx="1.30" fill="#f8c91c"/><rect x="6.90" y="7.00" width="4.60" height="3.90" rx="1.30" fill="#f8c91c"/><rect x="4.70" y="6.70" width="4.30" height="2.30" rx="0.80" fill="#3d9ad8"/></svg>
<span class="t " style="left:875.70px;top:24.00px;font-size:9.70px;line-height:14px;color:#cccccc;letter-spacing:-0.176px;">trpo.py</span>
<svg style="position:absolute;left:910.80px;top:28.10px;" width="5.80" height="5.80" viewBox="0 0 10 10"><path d="M1 1 L9 9 M9 1 L1 9" stroke="#888b8d" stroke-width="2.1" fill="none"/></svg>
<div style="position:absolute;left:290.60px;top:21.40px;width:1.20px;height:18.60px;background:#2b2d2f;"></div>
<div style="position:absolute;left:373.40px;top:21.40px;width:1.20px;height:18.60px;background:#2b2d2f;"></div>
<div style="position:absolute;left:455.40px;top:21.40px;width:1.20px;height:18.60px;background:#2b2d2f;"></div>
<div style="position:absolute;left:531.90px;top:21.40px;width:1.20px;height:18.60px;background:#2b2d2f;"></div>
<div style="position:absolute;left:643.10px;top:21.40px;width:1.20px;height:18.60px;background:#2b2d2f;"></div>
<div style="position:absolute;left:749.10px;top:21.40px;width:1.20px;height:18.60px;background:#2b2d2f;"></div>
<div style="position:absolute;left:847.60px;top:21.40px;width:1.20px;height:18.60px;background:#2b2d2f;"></div>
<div style="position:absolute;left:922.00px;top:21.40px;width:1.20px;height:18.60px;background:#2b2d2f;"></div>
<div style="position:absolute;left:200.60px;top:40.90px;width:806.60px;height:564.10px;background:#282c34;overflow:hidden">
<div style="position:absolute;left:0.00px;top:0.00px;width:50.60px;height:600.00px;background:#292d36;"></div>
<div style="position:absolute;left:0.00px;top:453.07px;width:806.60px;height:17.20px;background:#2c313a;"></div>
<div style="position:absolute;left:0.00px;top:453.07px;width:50.60px;height:17.20px;background:#2e333d;"></div>
<div style="position:absolute;left:132.35px;top:285.52px;width:806.60px;height:17.00px;background:#3e4452;"></div>
<div style="position:absolute;left:55.00px;top:302.31px;width:806.60px;height:151.36px;background:#3e4452;"></div>
<div style="position:absolute;left:55.00px;top:453.07px;width:57.96px;height:17.20px;background:#3e4452;"></div>
<div style="position:absolute;left:112.46px;top:455.87px;width:1.30px;height:13.60px;background:#528bff;"></div>
<div style="position:absolute;left:55.30px;top:0.40px;width:64.56px;height:16.20px;background:#3b3e43;"></div>
<div style="position:absolute;left:50.60px;top:0.00px;width:0.90px;height:600.00px;background:#4d4e50;"></div>
<div class="ln" style="top:1.90px">1</div>
<div class="cl" style="top:1.25px">import ...</div>
<div class="ln" style="top:18.70px">9</div>
<div class="ln" style="top:35.49px">10</div>
<div class="cl" style="top:34.84px"><span style="color:#c679dd">try</span>:</div>
<div class="ln" style="top:52.29px">11</div>
<div class="cl" style="top:51.64px">    <span style="color:#c679dd">import</span> mujoco_py</div>
<div class="ln" style="top:69.08px">12</div>
<div class="cl" style="top:68.43px">    <span style="color:#c679dd">from</span> mujoco_py.mjlib <span style="color:#c679dd">import</span> mjlib</div>
<div class="ln" style="top:85.88px">13</div>
<div class="cl" style="top:85.23px"><span style="color:#c679dd">except</span> <span style="color:#56b6c2">ImportError</span> <span style="color:#c679dd">as</span> e:</div>
<div class="ln" style="top:102.67px">14</div>
<div class="cl" style="top:102.02px">    <span style="color:#c679dd">raise</span> error.DependencyNotInstalled(<span style="color:#98c379">"{}. (HINT: you need to install mujoco_py, and also perform the setup instructions</span></div>
<div class="ln" style="top:119.47px">15</div>
<div class="ln" style="top:136.26px">16</div>
<div class="cl" style="top:135.61px"><span style="color:#c679dd">class</span> <span style="color:#e5c07b">MujocoEnv</span>(gym.Env):</div>
<div class="ln" style="top:153.06px">17</div>
<div class="cl" style="top:152.41px">    <span style="color:#98c379">"""Superclass for all MuJoCo environments.</span></div>
<div class="ln" style="top:169.85px">18</div>
<div class="cl" style="top:169.20px">    <span style="color:#98c379">"""</span></div>
<div class="ln" style="top:186.65px">19</div>
<div class="ln" style="top:203.44px">20</div>
<div class="cl" style="top:202.79px">    <span style="color:#c679dd">def</span> __init__(<span style="color:#e06c75">self</span>, <span style="color:#d19a66">model_path</span>, <span style="color:#d19a66">frame_skip</span>):</div>
<div class="ln" style="top:220.24px">21</div>
<div class="cl" style="top:219.59px">        <span style="color:#c679dd">if</span> <span style="color:#d19a66">model_path</span>.startswith(<span style="color:#98c379">"/"</span>):</div>
<div class="ln" style="top:237.03px">22</div>
<div class="cl" style="top:236.38px">            fullpath = <span style="color:#d19a66">model_path</span></div>
<div class="ln" style="top:253.83px">23</div>
<div class="cl" style="top:253.18px">        <span style="color:#c679dd">else</span>:</div>
<div class="ln" style="top:270.62px">24</div>
<div class="cl" style="top:269.97px">            fullpath = os.path.join(os.path.dirname(__file__), <span style="color:#98c379">"assets"</span>, <span style="color:#d19a66">model_path</span>)</div>
<div class="ln" style="top:287.42px">25</div>
<div class="cl" style="top:286.77px">        <span style="color:#c679dd">if</span> <span style="color:#c679dd">not</span> path.exists(fullpath):</div>
<div class="ln" style="top:304.21px">26</div>
<div class="cl" style="top:303.56px">            <span style="color:#c679dd">raise</span> <span style="color:#56b6c2">IOError</span>(<span style="color:#98c379">"File %s does not exist"</span> % fullpath)</div>
<div class="ln" style="top:321.00px">27</div>
<div class="cl" style="top:320.36px">        <span style="color:#e06c75">self</span>.frame_skip = <span style="color:#d19a66">frame_skip</span></div>
<div class="ln" style="top:337.80px">28</div>
<div class="cl" style="top:337.15px">        <span style="color:#e06c75">self</span>.model = mujoco_py.MjModel(fullpath)</div>
<div class="ln" style="top:354.60px">29</div>
<div class="cl" style="top:353.95px">        <span style="color:#e06c75">self</span>.data = <span style="color:#e06c75">self</span>.model.data</div>
<div class="ln" style="top:371.39px">30</div>
<div class="cl" style="top:370.74px">        <span style="color:#e06c75">self</span>.viewer = <span style="color:#c679dd">None</span></div>
<div class="ln" style="top:388.19px">31</div>
<div class="ln" style="top:404.98px">32</div>
<div class="cl" style="top:404.33px">        <span style="color:#e06c75">self</span>.metadata = {</div>
<div class="ln" style="top:421.78px">33</div>
<div class="cl" style="top:421.13px">            <span style="color:#98c379">'render.modes'</span>: [<span style="color:#98c379">'human'</span>, <span style="color:#98c379">'rgb_array'</span>],</div>
<div class="ln" style="top:438.57px">34</div>
<div class="cl" style="top:437.92px">            <span style="color:#98c379">'video.frames_per_second'</span>: <span style="color:#56b6c2">int</span>(np.round(<span style="color:#d19a66">1.0</span> / <span style="color:#e06c75">self</span>.dt))</div>
<div class="ln" style="top:455.37px">35</div>
<div class="cl" style="top:454.72px">        }</div>
<div class="ln" style="top:472.16px">36</div>
<div class="ln" style="top:488.96px">37</div>
<div class="cl" style="top:488.31px">        <span style="color:#e06c75">self</span>.init_qpos = <span style="color:#e06c75">self</span>.model.data.qpos.ravel().copy()</div>
<div class="ln" style="top:505.75px">38</div>
<div class="cl" style="top:505.10px">        <span style="color:#e06c75">self</span>.init_qvel = <span style="color:#e06c75">self</span>.model.data.qvel.ravel().copy()</div>
<div class="ln" style="top:522.55px">39</div>
<div class="cl" style="top:521.90px">        observation, _reward, done, _info = <span style="color:#e06c75">self</span>._step(np.zeros(<span style="color:#e06c75">self</span>.model.nu))</div>
<div class="ln" style="top:539.34px">40</div>
<div class="cl" style="top:538.69px">        <span style="color:#c679dd">assert</span> <span style="color:#c679dd">not</span> done</div>
<div class="ln" style="top:556.13px">41</div>
<div class="cl" style="top:555.49px">        <span style="color:#e06c75">self</span>.obs_dim = observation.size</div>
<svg style="position:absolute;left:47.40px;top:6.20px;" width="7.20" height="7.20" viewBox="0 0 9 9"><rect x="0.6" y="0.6" width="7.8" height="7.8" fill="#282c34" stroke="#5a5d63" stroke-width="0.9"/><path d="M2.2 4.5 H6.8 M4.5 2.2 V6.8" stroke="#7c8087" stroke-width="1"/></svg>
<svg style="position:absolute;left:47.40px;top:39.39px;" width="7.20" height="9.40" viewBox="0 0 9 12"><path d="M0.6 0.6 H8.4 V7 L4.5 11.2 L0.6 7 Z" fill="#282c34" stroke="#5a5d63" stroke-width="0.9"/><path d="M2.4 4.4 H6.6" stroke="#70737a" stroke-width="1"/></svg>
<svg style="position:absolute;left:47.40px;top:140.16px;" width="7.20" height="9.40" viewBox="0 0 9 12"><path d="M0.6 0.6 H8.4 V7 L4.5 11.2 L0.6 7 Z" fill="#282c34" stroke="#5a5d63" stroke-width="0.9"/><path d="M2.4 4.4 H6.6" stroke="#70737a" stroke-width="1"/></svg>
<svg style="position:absolute;left:47.40px;top:207.34px;" width="7.20" height="9.40" viewBox="0 0 9 12"><path d="M0.6 0.6 H8.4 V7 L4.5 11.2 L0.6 7 Z" fill="#282c34" stroke="#5a5d63" stroke-width="0.9"/><path d="M2.4 4.4 H6.6" stroke="#70737a" stroke-width="1"/></svg>
<svg style="position:absolute;left:47.40px;top:408.88px;" width="7.20" height="9.40" viewBox="0 0 9 12"><path d="M0.6 0.6 H8.4 V7 L4.5 11.2 L0.6 7 Z" fill="#282c34" stroke="#5a5d63" stroke-width="0.9"/><path d="M2.4 4.4 H6.6" stroke="#70737a" stroke-width="1"/></svg>
<svg style="position:absolute;left:47.40px;top:72.28px;" width="7.20" height="9.40" viewBox="0 0 9 12"><path d="M0.6 11.4 H8.4 V5 L4.5 0.8 L0.6 5 Z" fill="#282c34" stroke="#5a5d63" stroke-width="0.9"/><path d="M2.4 7.6 H6.6" stroke="#70737a" stroke-width="1"/></svg>
<svg style="position:absolute;left:47.40px;top:458.56px;" width="7.20" height="9.40" viewBox="0 0 9 12"><path d="M0.6 11.4 H8.4 V5 L4.5 0.8 L0.6 5 Z" fill="#282c34" stroke="#5a5d63" stroke-width="0.9"/><path d="M2.4 7.6 H6.6" stroke="#70737a" stroke-width="1"/></svg>
<svg style="position:absolute;left:29.50px;top:137.16px;" width="10.00" height="10.40" viewBox="0 0 10 10.4"><circle cx="3.5" cy="3.9" r="3.25" fill="#6db3dc"/><rect x="2.2" y="2.6" width="2.6" height="2.6" fill="none" stroke="#3a6a8a" stroke-width="0.7"/><path d="M7.9 0.2 V7.8" stroke="#4c5059" stroke-width="1.3" fill="none"/><path d="M6.6 7.4 H9.2 L7.9 9.6 Z" fill="#c4c4c4"/></svg>
<svg style="position:absolute;left:29.50px;top:204.34px;" width="10.00" height="10.40" viewBox="0 0 10 10.4"><circle cx="3.5" cy="3.9" r="3.25" fill="#6db3dc"/><rect x="2.2" y="2.6" width="2.6" height="2.6" fill="none" stroke="#3a6a8a" stroke-width="0.7"/><path d="M7.9 0.2 V7.8" stroke="#4c5059" stroke-width="1.3" fill="none"/><path d="M6.6 7.4 H9.2 L7.9 9.6 Z" fill="#c4c4c4"/></svg>
<svg style="position:absolute;left:62.00px;top:452.86px;" width="9.00" height="12.60" viewBox="0 0 9 12.6"><path d="M4.5 0.3 Q8.6 0.3 8.6 4.2 Q8.6 6 7 7.6 L6.6 9 H2.4 L2 7.6 Q0.4 6 0.4 4.2 Q0.4 0.3 4.5 0.3 Z" fill="#f2b24c"/><path d="M3.2 3.4 L4.5 5.4 L5.8 3.4" stroke="#f9d48c" stroke-width="0.8" fill="none"/><rect x="2.6" y="9.4" width="3.8" height="2.6" rx="0.6" fill="#8a8d90"/></svg>
<div style="position:absolute;left:798.40px;top:13.70px;width:6.20px;height:130.20px;background:rgba(160,164,172,0.42);border-radius:3.1px;"></div>
<svg style="position:absolute;left:796.00px;top:1.70px;" width="9.40" height="7.40" viewBox="0 0 9.4 7.4"><path d="M0.6 3.2 L3.6 6.2 L8.8 0.8" stroke="#59a83f" stroke-width="1.9" fill="none"/></svg>
</div>
<div style="position:absolute;left:1007.20px;top:21.40px;width:1.40px;height:584.00px;background:#2f3133;"></div>
<div style="position:absolute;left:1008.40px;top:21.40px;width:15.60px;height:584.00px;background:#3c3f41;"></div>
<svg style="position:absolute;left:1010.00px;top:29.20px;" width="11.20" height="11.00" viewBox="0 0 11.2 11"><ellipse cx="5.6" cy="1.8" rx="5.4" ry="1.7" fill="#3f9fd0"/><ellipse cx="5.6" cy="4.3" rx="5.4" ry="1.7" fill="#3f9fd0"/><ellipse cx="5.6" cy="6.8" rx="5.4" ry="1.7" fill="#3f9fd0"/><ellipse cx="5.6" cy="9.3" rx="5.4" ry="1.7" fill="#3f9fd0"/></svg>
<span style="position:absolute;left:1022.2px;top:43.4px;transform-origin:0 0;transform:rotate(90deg);white-space:pre;font-size:9.4px;line-height:12px;height:12px;color:#bbbbbb;letter-spacing:-0.2px">Database</span>
<div style="position:absolute;left:0.00px;top:604.60px;width:1024.00px;height:0.80px;background:#2f3133;"></div>
<div style="position:absolute;left:0.00px;top:605.40px;width:1024.00px;height:17.20px;background:#3c3f41;"></div>
<div style="position:absolute;left:0.00px;top:605.20px;width:1024.00px;height:0.80px;background:#505355;"></div>
<div style="position:absolute;left:0.00px;top:622.40px;width:1024.00px;height:0.80px;background:#3a3d3f;"></div>
<div style="position:absolute;left:0.00px;top:623.00px;width:1024.00px;height:17.00px;background:#3c3f41;"></div>
<svg style="position:absolute;left:24.80px;top:609.00px;" width="10.60" height="11.00" viewBox="0 0 10.6 11"><circle cx="3.4" cy="3" r="2.8" fill="#d8d8d8"/><circle cx="6.4" cy="4.6" r="2.6" fill="#e2a76c"/><path d="M3 11 Q3 7.6 6.4 7.6 Q9.8 7.6 9.8 11 Z" fill="#3f88c5"/><path d="M2.2 2.6 L3.2 3.6 L4.8 1.8" stroke="#444" stroke-width="0.7" fill="none"/></svg>
<span class="t" style="left:38.2px;top:607.9px;font-size:9.2px;line-height:14px;color:#bbbbbb;letter-spacing:-0.1px"><u>6</u>: TODO</span>
<svg style="position:absolute;left:92.00px;top:609.40px;" width="9.60" height="10.40" viewBox="0 0 9.6 10.4"><path d="M2 2 V8.4 M2 6.4 Q7.4 6 7.6 2.6" stroke="#4a96c9" stroke-width="1" fill="none"/><circle cx="2" cy="1.8" r="1.5" fill="#3c3f41" stroke="#4a96c9" stroke-width="0.9"/><circle cx="2" cy="8.6" r="1.5" fill="#3c3f41" stroke="#4a96c9" stroke-width="0.9"/><circle cx="7.6" cy="2.2" r="1.5" fill="#3c3f41" stroke="#4a96c9" stroke-width="0.9"/></svg>
<span class="t" style="left:105.4px;top:607.9px;font-size:9.2px;line-height:14px;color:#bbbbbb;letter-spacing:-0.02px"><u>9</u>: Version Control</span>
<svg style="position:absolute;left:198.00px;top:608.80px;" width="11.00" height="11.00" viewBox="0 0 12 12"><path d="M3.4 0.4 H6.8 Q8 0.4 8 1.6 V3.6 Q8 4.6 7 4.6 H4.4 Q3.1 4.6 3.1 5.9 V7 H1.8 Q0.4 7 0.4 5.4 V3.8 Q0.4 2.4 1.8 2.4 H3.4 Z" fill="#3f9ad6"/><path d="M8.2 3.2 H9.6 Q11 3.2 11 4.8 V6.6 Q11 8 9.6 8 H8 V9.8 Q8 11 6.8 11 H4.6 Q3.4 11 3.4 9.8 V7.8 Q3.4 6.6 4.6 6.6 H7 Q8.2 6.6 8.2 5.4 Z" fill="#f7c821"/><path d="M8.6 8.6 L10.8 10.2 L8.6 11.8" stroke="#d8d8d8" stroke-width="0.9" fill="none"/></svg>
<span class="t " style="left:212.00px;top:607.90px;font-size:9.20px;line-height:14px;color:#bbbbbb;letter-spacing:-0.073px;">Python Console</span>
<svg style="position:absolute;left:293.20px;top:609.40px;" width="11.00" height="10.40" viewBox="0 0 11 10.4"><rect x="0.4" y="0.4" width="10.2" height="9.6" fill="#0f1011" stroke="#9da0a2" stroke-width="0.8"/><rect x="0.4" y="0.4" width="10.2" height="1.5" fill="#9da0a2"/><path d="M2.2 4.2 L4.2 5.8 L2.2 7.4 M5 7.8 H7.8" stroke="#e8e8e8" stroke-width="0.9" fill="none"/></svg>
<span class="t " style="left:307.30px;top:607.90px;font-size:9.20px;line-height:14px;color:#bbbbbb;letter-spacing:0.133px;">Terminal</span>
<svg style="position:absolute;left:942.00px;top:608.80px;" width="12.60" height="11.60" viewBox="0 0 12.6 11.6"><ellipse cx="6.2" cy="5.2" rx="5.5" ry="4.7" fill="none" stroke="#a0a3a5" stroke-width="0.9"/><path d="M8.4 9.2 L11.6 11.2 L10.6 7.8" fill="none" stroke="#a0a3a5" stroke-width="0.9"/></svg>
<span class="t " style="left:958.60px;top:607.90px;font-size:9.20px;line-height:14px;color:#bbbbbb;letter-spacing:-0.154px;">Event Log</span>
<svg style="position:absolute;left:3.60px;top:625.80px;" width="11.60" height="11.80" viewBox="0 0 11.6 11.8"><rect x="0.5" y="0.5" width="10.6" height="9" fill="#55595b" stroke="#a0a3a5" stroke-width="0.9"/><path d="M0.4 11.2 H11.2" stroke="#a0a3a5" stroke-width="0.9"/></svg>
<span class="t " style="left:739.50px;top:624.80px;font-size:9.20px;line-height:14px;color:#bbbbbb;letter-spacing:-0.019px;">394 chars, 11 lines</span>
<span class="t " style="left:828.20px;top:624.80px;font-size:9.20px;line-height:14px;color:#bbbbbb;letter-spacing:-0.056px;">35:10</span>
<span class="t " style="left:860.00px;top:624.80px;font-size:9.20px;line-height:14px;color:#bbbbbb;letter-spacing:-0.337px;">LF</span>
<span class="t " style="left:883.20px;top:624.80px;font-size:9.20px;line-height:14px;color:#bbbbbb;letter-spacing:0.009px;">UTF-8</span>
<span class="t " style="left:922.20px;top:624.80px;font-size:9.20px;line-height:14px;color:#bbbbbb;letter-spacing:0.131px;">Git: master</span>
<svg style="position:absolute;left:871.40px;top:628.80px;" width="3.40" height="6.60" viewBox="0 0 3.4 6.6"><path d="M0 2.6 L1.7 0.4 L3.4 2.6 Z M0 4 L1.7 6.2 L3.4 4 Z" fill="#a0a3a5"/></svg>
<svg style="position:absolute;left:911.20px;top:628.80px;" width="3.40" height="6.60" viewBox="0 0 3.4 6.6"><path d="M0 2.6 L1.7 0.4 L3.4 2.6 Z M0 4 L1.7 6.2 L3.4 4 Z" fill="#a0a3a5"/></svg>
<svg style="position:absolute;left:971.40px;top:628.80px;" width="3.40" height="6.60" viewBox="0 0 3.4 6.6"><path d="M0 2.6 L1.7 0.4 L3.4 2.6 Z M0 4 L1.7 6.2 L3.4 4 Z" fill="#a0a3a5"/></svg>
<svg style="position:absolute;left:989.00px;top:628.60px;" width="7.40" height="7.60" viewBox="0 0 8 8.4"><rect x="2.6" y="4" width="5" height="4" fill="none" stroke="#a0a3a5" stroke-width="1"/><path d="M0.8 4.6 V2.8 Q0.8 0.8 2.6 0.8 Q4.4 0.8 4.4 2.8 V4" fill="none" stroke="#a0a3a5" stroke-width="0.9"/></svg>
<svg style="position:absolute;left:1007.60px;top:626.40px;" width="10.80" height="11.20" viewBox="0 0 10.8 11.2"><path d="M1.6 3 H9.2 V7.4 Q9.2 10.6 5.4 10.6 Q1.6 10.6 1.6 7.4 Z" fill="none" stroke="#85898b" stroke-width="0.9"/><path d="M2.4 2.8 Q2.4 0.5 5.4 0.5 Q8.4 0.5 8.4 2.8" fill="#6a6e70" stroke="#85898b" stroke-width="0.8"/><path d="M0.3 3.2 H10.5" stroke="#85898b" stroke-width="0.9"/><circle cx="3.8" cy="5.6" r="0.7" fill="#85898b"/><circle cx="7" cy="5.6" r="0.7" fill="#85898b"/><path d="M3.8 8 H7" stroke="#85898b" stroke-width="0.8"/></svg>
</div>
</body></html>
